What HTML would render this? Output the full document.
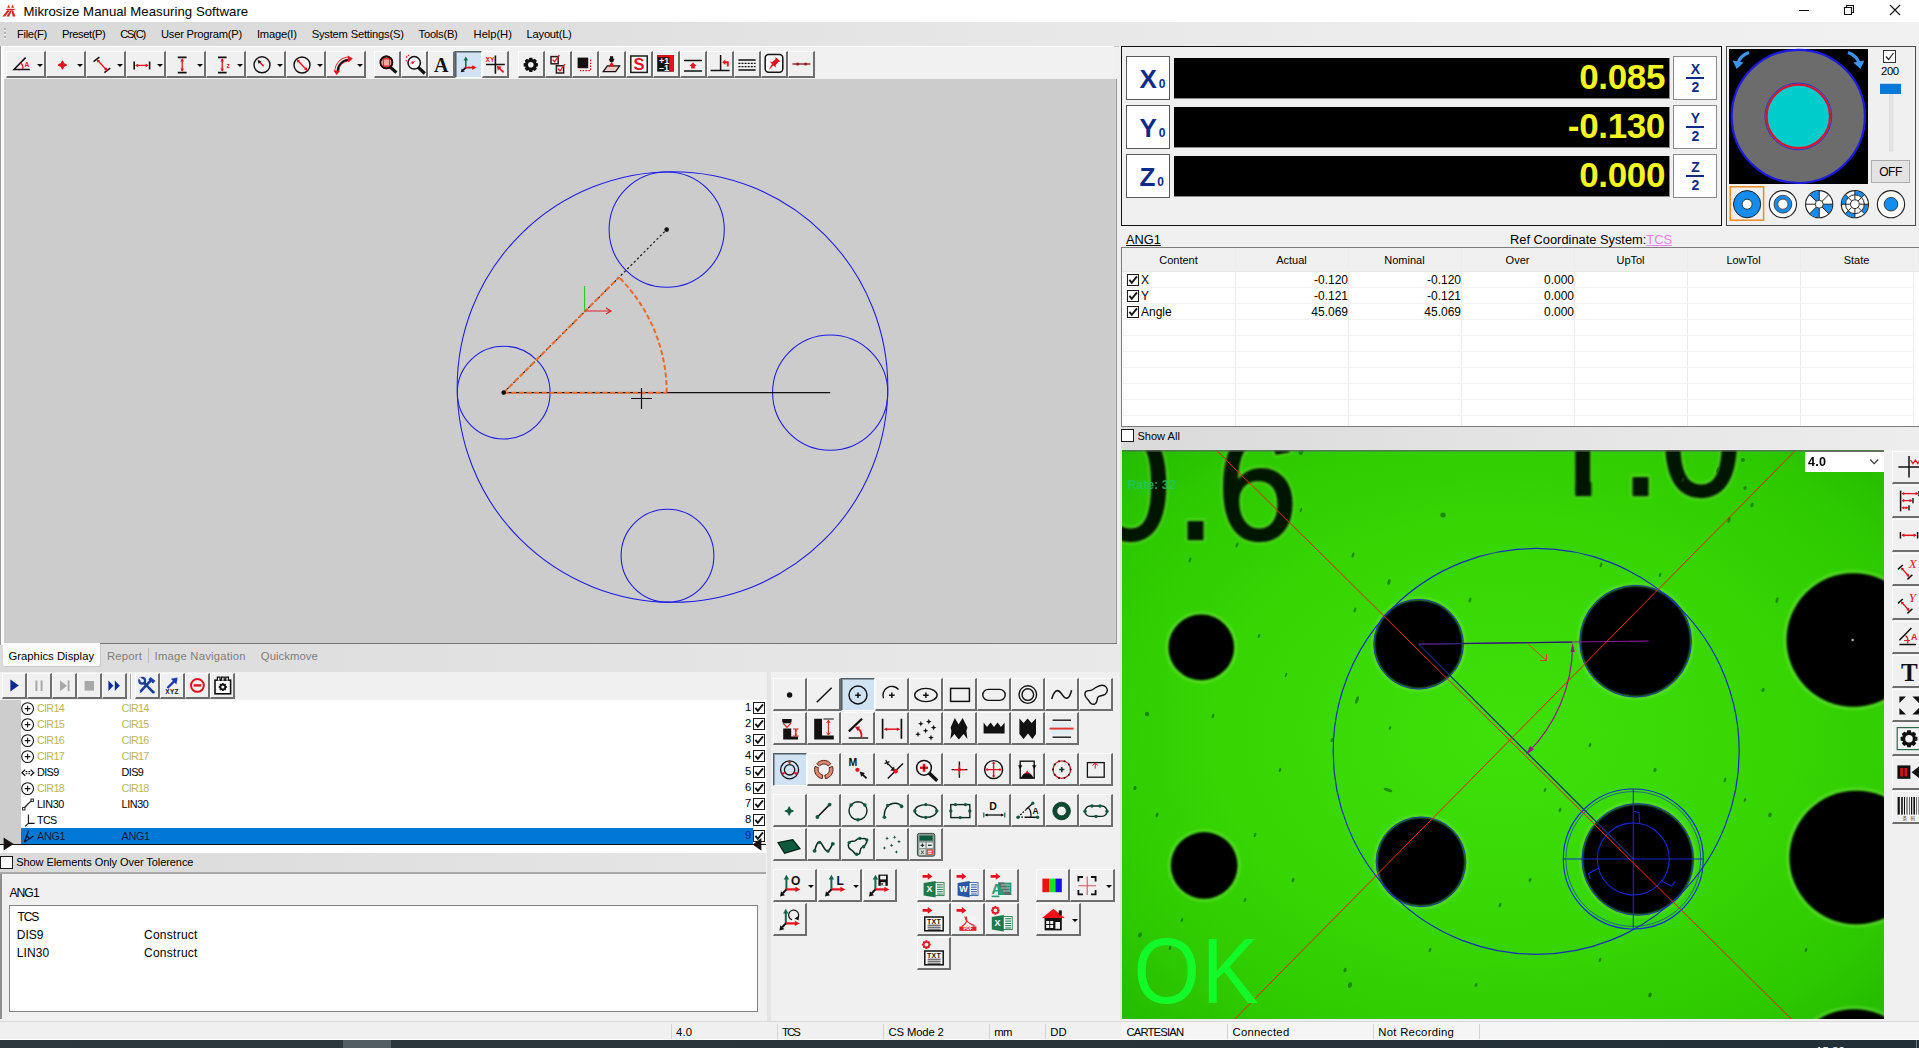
<!DOCTYPE html>
<html lang="en"><head><meta charset="utf-8"><title>Mikrosize Manual Measuring Software</title>
<style>
*{box-sizing:border-box;margin:0;padding:0}
html,body{width:1919px;height:1048px;overflow:hidden;background:#f0f0f0;font-family:"Liberation Sans",sans-serif;font-size:12px;color:#000}
.abs{position:absolute}
#titlebar{left:0;top:0;width:1919px;height:22px;background:#fff}
#title{left:22px;top:3px;font-size:13.2px;letter-spacing:0.1px;color:#000;white-space:nowrap}
#menubar{left:0;top:22px;width:1919px;height:24px;background:linear-gradient(to right,#d9d9d9,#dedede 25%,#e6e6e6 50%,#ededed 75%,#f1f1f1)}
#menubar span{position:absolute;top:5px;font-size:11.4px;white-space:nowrap;color:#000}
.btn{position:absolute;background:#f0f0f0;border-top:1px solid #fcfcfc;border-left:1px solid #fcfcfc;border-right:2px solid #6e6e6e;border-bottom:2px solid #6e6e6e}
.btn.on{background:#cfe3f5;border-top:1px solid #525e68;border-left:1px solid #525e68;border-right:1px solid #fff;border-bottom:1px solid #fff;box-shadow:inset 1px 1px 0 #8d9ba8}
.btn.on svg{left:1px;top:1px}
.btn svg{position:absolute;left:0;top:0}
.btn.d1 svg{top:1px}
.btn.d2 svg{top:2px}
.dd{position:absolute;width:0;height:0;border-left:3.5px solid transparent;border-right:3.5px solid transparent;border-top:3.6px solid #000}
.t{position:absolute;white-space:nowrap}
.cb{position:absolute;width:13px;height:13px;background:#fff;border:1px solid #222}
</style></head>
<body>
<div id="titlebar" class="abs"></div>
<svg class="abs" style="left:0;top:0" width="20" height="20" viewBox="0 0 20 20"><g fill="#d62a1e"><path d="M8.6 4.6 L10 7.7 H7.2Z"/><path d="M12.6 4.6 L14 7.7 H11.2Z"/><path d="M6.2 8.8 H14.6 V10 H6.2Z"/><path d="M7.4 10.2 H10 L5 16.5 H2.4Z"/><path d="M10.4 10.2 H12 L9.2 16.5 H6.4Z"/><path d="M11.6 10.2 H13.2 L15.4 16.5 H12.6Z"/></g></svg>
<div class="t" style="left:23.4px;top:4px;font-size:13.2px;letter-spacing:0.037px;">Mikrosize Manual Measuring Software</div>
<svg class="abs" style="left:1780px;top:0" width="139" height="22" viewBox="0 0 139 22"><path d="M19 10.5 H29" stroke="#111" stroke-width="1"/><path d="M64.5 7.5 H71.5 V14.5 H64.5Z M66.5 7.5 V5.5 H73.5 V12.5 H71.5" stroke="#111" stroke-width="1.1" fill="none"/><path d="M110 5 L120 15 M120 5 L110 15" stroke="#111" stroke-width="1.1"/></svg>
<div id="menubar" class="abs">
<i class="abs" style="left:3.6px;top:6px;width:2.4px;height:12px;background:repeating-linear-gradient(#b4b4b4 0 2px,#f2f2f2 2px 3px,transparent 3px 4px)"></i>
</div>
<div class="t" style="left:17px;top:27.5px;font-size:11.2px;letter-spacing:-0.341px;">File(F)</div>
<div class="t" style="left:62px;top:27.5px;font-size:11.2px;letter-spacing:-0.450px;">Preset(P)</div>
<div class="t" style="left:120.3px;top:27.5px;font-size:11.2px;letter-spacing:-1.277px;">CS(C)</div>
<div class="t" style="left:161px;top:27.5px;font-size:11.2px;letter-spacing:-0.238px;">User Program(P)</div>
<div class="t" style="left:257px;top:27.5px;font-size:11.2px;letter-spacing:-0.243px;">Image(I)</div>
<div class="t" style="left:311.7px;top:27.5px;font-size:11.2px;letter-spacing:-0.209px;">System Settings(S)</div>
<div class="t" style="left:418.6px;top:27.5px;font-size:11.2px;letter-spacing:-0.254px;">Tools(B)</div>
<div class="t" style="left:473.6px;top:27.5px;font-size:11.2px;letter-spacing:-0.047px;">Help(H)</div>
<div class="t" style="left:526.6px;top:27.5px;font-size:11.2px;letter-spacing:-0.252px;">Layout(L)</div>
<div class="abs" style="left:0;top:45.5px;width:1119px;height:1px;background:linear-gradient(to right,#a8a8a8,#c4c4c4)"></div>
<div class="abs" style="left:1px;top:46px;width:1113px;height:33px;background:#f1f1f1;border-left:1px solid #fff;border-top:1px solid #fff"></div>
<div class="abs" style="left:1116px;top:79px;width:1px;height:565px;background:#9c9c9c"></div>
<div class="btn " style="left:6px;top:51px;width:40px;height:27px"><svg width="37" height="24" viewBox="0 0 37 24"><path d="M18.6 5.6 L7 17.4 H22.8" fill="none" stroke="#111" stroke-width="1.5"/><path d="M13.6 10.8 Q16.4 13.4 16 17.4" fill="none" stroke="#e8101c" stroke-width="1.2"/><text x="17.6" y="15" style="font-family:'Liberation Sans',sans-serif;font-weight:bold;font-size:6.6px" fill="#e8101c">A</text></svg><i class="dd" style="left:30.2px;top:11.6px"></i></div>
<div class="btn " style="left:46px;top:51px;width:40px;height:27px"><svg width="37" height="24" viewBox="0 0 37 24"><path d="M15.4 9.4 L16.6 11.8 L19.2 13 L16.6 14.2 L15.4 16.8 L14.2 14.2 L11.6 13 L14.2 11.8 Z" fill="#e8101c" stroke="#e8101c" stroke-width="1.5" stroke-linejoin="round"/></svg><i class="dd" style="left:30.2px;top:11.6px"></i></div>
<div class="btn " style="left:86px;top:51px;width:40px;height:27px"><svg width="37" height="24" viewBox="0 0 37 24"><path d="M6.6 9.6 L12.4 5.2 M17.4 20.6 L23.2 16.2" stroke="#111" stroke-width="1.5"/><path d="M10.4 8 L19.8 18.2" stroke="#e8101c" stroke-width="1.3"/><path d="M9.60 7.20 L13.05 8.38 L10.45 10.75 Z" fill="#e8101c"/><path d="M20.50 19.00 L17.05 17.82 L19.65 15.45 Z" fill="#e8101c"/></svg><i class="dd" style="left:30.2px;top:11.6px"></i></div>
<div class="btn " style="left:126px;top:51px;width:40px;height:27px"><svg width="37" height="24" viewBox="0 0 37 24"><path d="M7.2 9.4 V17.4 M22.6 9.4 V17.4" stroke="#111" stroke-width="1.6"/><path d="M9 13.4 H21" stroke="#e8101c" stroke-width="1.3"/><path d="M8.00 13.40 L11.20 11.64 L11.20 15.16 Z" fill="#e8101c"/><path d="M21.80 13.40 L18.60 15.16 L18.60 11.64 Z" fill="#e8101c"/></svg><i class="dd" style="left:30.2px;top:11.6px"></i></div>
<div class="btn " style="left:166px;top:51px;width:40px;height:27px"><svg width="37" height="24" viewBox="0 0 37 24"><path d="M10.8 5.4 H19.6 M10.8 20.6 H19.6" stroke="#111" stroke-width="1.7"/><path d="M15.2 7 V19" stroke="#e8101c" stroke-width="1.3"/><path d="M15.20 6.20 L16.96 9.40 L13.44 9.40 Z" fill="#e8101c"/><path d="M15.20 19.80 L13.44 16.60 L16.96 16.60 Z" fill="#e8101c"/></svg><i class="dd" style="left:30.2px;top:11.6px"></i></div>
<div class="btn " style="left:206px;top:51px;width:40px;height:27px"><svg width="37" height="24" viewBox="0 0 37 24"><path d="M11 5.4 H19.6 M11 20.6 H19.6" stroke="#111" stroke-width="1.7"/><path d="M15.2 7 V19" stroke="#e8101c" stroke-width="1.3"/><path d="M15.20 6.20 L16.96 9.40 L13.44 9.40 Z" fill="#e8101c"/><path d="M15.20 19.80 L13.44 16.60 L16.96 16.60 Z" fill="#e8101c"/><text x="19.4" y="15.6" style="font-family:'Liberation Sans',sans-serif;font-weight:bold;font-size:6.6px" fill="#e8101c">z</text></svg><i class="dd" style="left:30.2px;top:11.6px"></i></div>
<div class="btn " style="left:246px;top:51px;width:40px;height:27px"><svg width="37" height="24" viewBox="0 0 37 24"><circle cx="15" cy="12.8" r="8" fill="none" stroke="#111" stroke-width="1.4"/><path d="M16.6 14.2 L11.6 9" stroke="#e8101c" stroke-width="1.4"/><path d="M10.60 8.00 L14.30 9.17 L11.59 11.75 Z" fill="#111"/></svg><i class="dd" style="left:30.2px;top:11.6px"></i></div>
<div class="btn " style="left:286px;top:51px;width:40px;height:27px"><svg width="37" height="24" viewBox="0 0 37 24"><circle cx="15" cy="13" r="8" fill="none" stroke="#111" stroke-width="1.4"/><path d="M10.2 8 L19.8 18" stroke="#e8101c" stroke-width="1.4"/><path d="M9.60 7.40 L12.86 8.43 L10.47 10.71 Z" fill="#e8101c"/><path d="M20.60 18.80 L17.12 17.70 L19.67 15.27 Z" fill="#e8101c"/></svg><i class="dd" style="left:30.2px;top:11.6px"></i></div>
<div class="btn " style="left:326px;top:51px;width:40px;height:27px"><svg width="37" height="24" viewBox="0 0 37 24"><path d="M9.8 19.4 A12.4 12.4 0 0 1 21.6 6.9" fill="none" stroke="#e8101c" stroke-width="4.6"/><path d="M9.8 19.4 A12.4 12.4 0 0 1 21.6 6.9" fill="none" stroke="#f6f0f0" stroke-width="3"/><path d="M10.6 19.2 A11.6 11.6 0 0 1 21.4 7.8" fill="none" stroke="#111" stroke-width="1.9"/><path d="M20.6 3.4 L25.8 6.4 L21.4 10.6 Z" fill="#e8101c"/><path d="M6.4 18.4 L13.2 18.8 L9.6 23 Z" fill="#e8101c"/></svg><i class="dd" style="left:30.2px;top:11.6px"></i></div>
<div class="btn " style="left:374px;top:51px;width:27px;height:27px"><svg width="24" height="24" viewBox="0 0 24 24"><path d="M15.6 15.4 L20.2 19.6" stroke="#111" stroke-width="3.2" stroke-linecap="square"/><circle cx="11.4" cy="10.4" r="6" fill="#f4f4f4" stroke="#111" stroke-width="1.6"/><rect x="8.2" y="6.8" width="6.6" height="7.4" fill="#f4a8a0" stroke="#e8101c" stroke-width="1.3"/><circle cx="11.4" cy="10.4" r="6" fill="none" stroke="#1a0000" stroke-width="1.6"/></svg></div>
<div class="btn " style="left:401px;top:51px;width:27px;height:27px"><svg width="24" height="24" viewBox="0 0 24 24"><path d="M16.6 15.6 L21.6 20.4" stroke="#111" stroke-width="3.2" stroke-linecap="square"/><circle cx="12.2" cy="10.8" r="6.2" fill="#f4f4f4" stroke="#111" stroke-width="1.5"/><path d="M4.2 5.6 L5.6 3.4 L8 3.2 M4.4 9.4 L4 7.4" fill="none" stroke="#e8101c" stroke-width="1.1" stroke-dasharray="1.6 1.2"/><path d="M8.6 11.6 L11 9.6 L10.4 11.8 L12.6 9.2" fill="none" stroke="#e8101c" stroke-width="1"/></svg></div>
<div class="btn " style="left:428px;top:51px;width:27px;height:27px"><svg width="24" height="24" viewBox="0 0 24 24"><text x="12.2" y="19.6" text-anchor="middle" style="font-family:'Liberation Serif',serif;font-weight:bold;font-size:20px" fill="#111">A</text></svg></div>
<div class="btn on" style="left:455px;top:51px;width:27px;height:27px"><svg width="24" height="24" viewBox="0 0 24 24"><path d="M8.8 14.6 V6.4" stroke="#0a6a4a" stroke-width="1.5"/><path d="M8.8 3.4 L11.1 7.6 H6.5 Z" fill="#0a6a4a"/><path d="M8.8 14.6 H16" stroke="#e8101c" stroke-width="1.8"/><path d="M19.6 14.6 L15.2 12.2 V17 Z" fill="#e8101c"/><path d="M8.8 14.6 L6 17.2" stroke="#111" stroke-width="1.8"/><path d="M3.8 19.2 L4.8 15.4 L7.8 18.4 Z" fill="#111"/></svg></div>
<div class="btn " style="left:482px;top:51px;width:27px;height:27px"><svg width="24" height="24" viewBox="0 0 24 24"><path d="M3 12.5 H21.8 M12.4 3.4 V21.8" stroke="#111" stroke-width="1.6"/><text x="2.6" y="9.8" style="font-family:'Liberation Sans',sans-serif;font-weight:bold;font-size:6.6px;letter-spacing:-0.1px" fill="#e8101c">XY</text><path d="M20.6 20.4 L15.6 15.6" stroke="#e8101c" stroke-width="1.7"/><path d="M13.8 13.8 L18.6 14.8 L14.8 18.6 Z" fill="#e8101c"/></svg></div>
<div class="btn " style="left:518px;top:51px;width:27px;height:27px"><svg width="24" height="24" viewBox="0 0 24 24"><path d="M18.95 11.35 L18.95 14.25 L16.87 14.94 L16.90 14.87 L17.88 16.83 L15.83 18.88 L13.87 17.90 L13.94 17.86 L13.25 19.95 L10.35 19.95 L9.66 17.87 L9.73 17.90 L7.77 18.88 L5.72 16.83 L6.70 14.87 L6.74 14.94 L4.65 14.25 L4.65 11.35 L6.73 10.66 L6.70 10.73 L5.72 8.77 L7.77 6.72 L9.73 7.70 L9.66 7.74 L10.35 5.65 L13.25 5.65 L13.94 7.73 L13.87 7.70 L15.83 6.72 L17.88 8.77 L16.90 10.73 L16.86 10.66Z" fill="#111"/><circle cx="11.8" cy="12.8" r="2.8" fill="#f0f0f0"/></svg></div>
<div class="btn " style="left:545px;top:51px;width:27px;height:27px"><svg width="24" height="24" viewBox="0 0 24 24"><rect x="5" y="4.6" width="7.2" height="7.2" fill="none" stroke="#2a1a1a" stroke-width="1.5"/><path d="M6.6 7.6 L8.6 9.8 L13.4 3" fill="none" stroke="#e8101c" stroke-width="1.3"/><rect x="10.4" y="13.8" width="7.2" height="7.2" fill="none" stroke="#2a1a1a" stroke-width="1.5"/><path d="M12 16.8 L14 19 L18.8 12.2" fill="none" stroke="#e8101c" stroke-width="1.3"/></svg></div>
<div class="btn d2" style="left:572px;top:51px;width:27px;height:27px"><svg width="24" height="24" viewBox="0 0 24 24"><rect x="4.6" y="3.6" width="10.6" height="10.6" fill="#111"/><path d="M17.6 5.6 V16.6 H7" fill="none" stroke="#e8101c" stroke-width="1.2" stroke-dasharray="1.6 1.3"/></svg></div>
<div class="btn d1" style="left:599px;top:51px;width:27px;height:27px"><svg width="24" height="24" viewBox="0 0 24 24"><path d="M7.4 12.8 H19.6 L15.6 18.6 H3.2 Z" fill="#f8c8c4" stroke="#111" stroke-width="1.3"/><path d="M8.6 13.4 L11.6 8.6 L14.6 13.4 Z" fill="#e8101c"/><rect x="10" y="3.2" width="3.2" height="3.2" fill="#111"/><path d="M8.8 5.8 H14.4 L13.2 9 H10 Z" fill="#111"/></svg></div>
<div class="btn d1" style="left:626px;top:51px;width:27px;height:27px"><svg width="24" height="24" viewBox="0 0 24 24"><rect x="3.8" y="3" width="16.4" height="16.4" fill="#fff" stroke="#1a1a1a" stroke-width="1.5"/><text x="12" y="17" text-anchor="middle" style="font-family:'Liberation Sans',sans-serif;font-weight:bold;font-size:16.5px" fill="#e8101c">S</text></svg></div>
<div class="btn " style="left:653px;top:51px;width:27px;height:27px"><svg width="24" height="24" viewBox="0 0 24 24"><rect x="3.2" y="3.2" width="16.6" height="16.4" fill="#111"/><rect x="15.2" y="3.2" width="4.6" height="16.4" fill="#e8101c"/><rect x="3.2" y="3.2" width="16.6" height="2" fill="#e8101c"/><text x="5" y="11.6" style="font-family:'Liberation Sans',sans-serif;font-weight:bold;font-size:9px" fill="#fff">+1</text><text x="5" y="19" style="font-family:'Liberation Sans',sans-serif;font-weight:bold;font-size:9px" fill="#fff">–1</text></svg></div>
<div class="btn d2" style="left:680px;top:51px;width:27px;height:27px"><svg width="24" height="24" viewBox="0 0 24 24"><path d="M3 6.6 H21 M3 17 H21" stroke="#111" stroke-width="1.5"/><path d="M12 8.6 L15.6 12 H13.8 V14.6 H10.2 V12 H8.4 Z" fill="#e8101c"/></svg></div>
<div class="btn d1" style="left:707px;top:51px;width:27px;height:27px"><svg width="24" height="24" viewBox="0 0 24 24"><path d="M2.6 17.6 H21.6 M12.6 2 V17.6" stroke="#111" stroke-width="1.5"/><path d="M19.8 13.4 V9.2 H16.2" fill="none" stroke="#e8101c" stroke-width="1.9"/><path d="M14.2 9.2 L17.4 6.4 V12 Z" fill="#e8101c"/></svg></div>
<div class="btn d1" style="left:734px;top:51px;width:27px;height:27px"><svg width="24" height="24" viewBox="0 0 24 24"><path d="M3.4 7 H20.6 M3.4 17 H20.6" stroke="#111" stroke-width="1.6"/><path d="M3.4 10.4 H20.6 M3.4 13.6 H20.6" stroke="#111" stroke-width="1.4" stroke-dasharray="2 1.1"/></svg></div>
<div class="btn " style="left:761px;top:51px;width:27px;height:27px"><svg width="24" height="24" viewBox="0 0 24 24"><rect x="3.2" y="2.6" width="17.6" height="17.6" rx="3.4" fill="#fff" stroke="#111" stroke-width="1.5"/><path d="M13.6 5 L18.4 9.6 L16.2 10 L13.6 13.4 L14 15.8 L11.4 13.4 L6.4 18.4 L10 12 L7.6 9.6 L10.2 10 L13.4 7.2 Z" fill="#e8101c"/></svg></div>
<div class="btn " style="left:788px;top:51px;width:27px;height:27px"><svg width="24" height="24" viewBox="0 0 24 24"><path d="M3.4 12 H21.4" stroke="#7a1a14" stroke-width="1.3"/><circle cx="8.6" cy="12" r="1.5" fill="#a01a14"/><circle cx="16.6" cy="12" r="1.5" fill="#a01a14"/></svg></div>
<div class="abs" style="left:2px;top:79px;width:1114px;height:564px;background:#cccccc;border-left:2px solid #e9e9e9"></div><svg class="abs" style="left:0;top:0" width="1120" height="645" viewBox="0 0 1120 645"><g fill="none" stroke="#1c1ce8" stroke-width="1.05"><circle cx="672.5" cy="387" r="215.3"/><circle cx="666.7" cy="229.6" r="57.6"/><circle cx="503.7" cy="392.6" r="46.4"/><circle cx="830.2" cy="392.6" r="57.6"/><circle cx="667.5" cy="555.7" r="46.4"/></g><path d="M503.7 392.6 H830.2" stroke="#111" stroke-width="1.1"/><path d="M503.7 392.6 L666.7 229.6" stroke="#111" stroke-width="1.1" stroke-dasharray="2.4 2.2"/><g fill="none" stroke="#ee6a26" stroke-width="2" stroke-dasharray="5 2.6"><path d="M503.7 392.8 H666.7"/><path d="M503.7 392.6 L619.0 277.3"/><path d="M666.7 392.6 A163 163 0 0 0 619.0 277.3"/></g><circle cx="503.7" cy="392.6" r="2.3" fill="#111"/><circle cx="666.7" cy="229.6" r="2.3" fill="#111"/><path d="M584.6 286 V311" stroke="#22cc22" stroke-width="1.1"/><path d="M584.6 311 H611 M606 308 L611 311 L606 314" stroke="#e02020" stroke-width="1.1" fill="none"/><path d="M631 398.5 H652 M641.5 388 V409" stroke="#111" stroke-width="1.2"/></svg>
<div class="abs" style="left:0;top:644px;width:1121px;height:28px;background:linear-gradient(to right,#dbdbdb,#e2e2e2 50%,#e9e9e9)"></div>
<div class="abs" style="left:0;top:643px;width:1117px;height:1.3px;background:#777"></div>
<div class="abs" style="left:3px;top:642.6px;width:97px;height:23.4px;background:#fafafa;border-radius:0 0 2px 2px;box-shadow:1px 1px 0 #c9c9c9"></div>
<div class="abs" style="left:0;top:47px;width:1px;height:598px;background:#9a9a9a"></div>
<div class="abs" style="left:1.4px;top:47px;width:2.8px;height:598px;background:#fbfbfb"></div>
<div class="t" style="left:8.4px;top:650px;font-size:11.3px;letter-spacing:0.021px;">Graphics Display</div>
<div class="t" style="left:107px;top:650px;font-size:11.3px;letter-spacing:0.205px;color:#7d7d7d;">Report</div>
<div class="abs" style="left:148px;top:648px;width:1px;height:15px;background:#bdbdbd"></div>
<div class="t" style="left:154.6px;top:650px;font-size:11.3px;letter-spacing:0.203px;color:#7d7d7d;">Image Navigation</div>
<div class="t" style="left:260.8px;top:650px;font-size:11.3px;letter-spacing:0.069px;color:#7d7d7d;">Quickmove</div>
<div class="abs" style="left:0;top:672px;width:768px;height:28px;background:#f0f0f0"></div>
<div class="btn " style="left:2px;top:673px;width:25px;height:26px"><svg width="22" height="23" viewBox="0 0 22 23"><path d="M7.4 5.6 L15.8 11.6 L7.4 17.6 Z" fill="#0a2a9a"/></svg></div>
<div class="btn " style="left:27px;top:673px;width:25px;height:26px"><svg width="22" height="23" viewBox="0 0 22 23"><path d="M8.4 6.4 V17 M13.6 6.4 V17" stroke="#a8a8a8" stroke-width="2"/></svg></div>
<div class="btn " style="left:52px;top:673px;width:25px;height:26px"><svg width="22" height="23" viewBox="0 0 22 23"><path d="M7 6.4 L14 11.8 L7 17.2 Z" fill="#a8a8a8"/><path d="M15.6 6.4 V17.2" stroke="#a8a8a8" stroke-width="1.8"/></svg></div>
<div class="btn " style="left:77px;top:673px;width:25px;height:26px"><svg width="22" height="23" viewBox="0 0 22 23"><rect x="6.6" y="7" width="9.4" height="9.6" fill="#a8a8a8"/></svg></div>
<div class="btn " style="left:102px;top:673px;width:25px;height:26px"><svg width="22" height="23" viewBox="0 0 22 23"><path d="M5.4 6.6 L10.4 11.8 L5.4 17 Z M11.8 6.6 L16.8 11.8 L11.8 17 Z" fill="#0a2a9a"/></svg></div>
<div class="abs" style="left:130px;top:674px;width:2px;height:25px;background:#a6a6a6;border-right:1px solid #fff"></div>
<div class="btn " style="left:135px;top:673px;width:25px;height:26px"><svg width="22" height="23" viewBox="0 0 22 23"><path d="M4.6 17.4 L14.6 6.6" stroke="#1a3c9c" stroke-width="2.6"/><path d="M13.4 4.4 L18.2 8.2" stroke="#1a3c9c" stroke-width="3.4"/><path d="M4 18.4 L6 16.4" stroke="#1a3c9c" stroke-width="1.4"/><path d="M7.6 8.4 L16.6 17.6" stroke="#1a3c9c" stroke-width="2.6"/><circle cx="6.2" cy="6.8" r="2.9" fill="none" stroke="#1a3c9c" stroke-width="2.2"/><path d="M3.4 3.8 L6.4 6.8" stroke="#f0f0f0" stroke-width="2.2"/><circle cx="17.2" cy="18" r="1.6" fill="#1a3c9c"/></svg></div>
<div class="btn " style="left:160px;top:673px;width:25px;height:26px"><svg width="22" height="23" viewBox="0 0 22 23"><path d="M6.4 14 L13.6 6.8" stroke="#1a3cb4" stroke-width="2.4"/><path d="M16.6 3.6 L15.4 10.4 L9.8 4.8 Z" fill="#1a3cb4"/><text x="11" y="20.2" text-anchor="middle" style="font-family:'Liberation Sans',sans-serif;font-weight:bold;font-size:6.4px;letter-spacing:0.3px" fill="#111">XYZ</text></svg></div>
<div class="btn " style="left:185px;top:673px;width:25px;height:26px"><svg width="22" height="23" viewBox="0 0 22 23"><circle cx="11.4" cy="11.4" r="6.4" fill="none" stroke="#e01020" stroke-width="2"/><rect x="7.6" y="10.2" width="7.6" height="2.4" fill="#e01020"/></svg></div>
<div class="btn " style="left:210px;top:673px;width:25px;height:26px"><svg width="22" height="23" viewBox="0 0 22 23"><rect x="4" y="6.2" width="15.6" height="13.6" fill="#fff" stroke="#111" stroke-width="1.6"/><path d="M6.4 6.6 V3.2 H9 V6.6 M10.6 6.6 V3.2 H13.2 V6.6 M14.8 6.6 V3.2 H17.4 V6.6" fill="#fff" stroke="#111" stroke-width="1.3"/><path d="M15.92 12.17 L15.92 13.83 L14.55 14.20 L14.59 14.10 L15.30 15.32 L14.12 16.50 L12.90 15.79 L13.00 15.75 L12.63 17.12 L10.97 17.12 L10.60 15.75 L10.70 15.79 L9.48 16.50 L8.30 15.32 L9.01 14.10 L9.05 14.20 L7.68 13.83 L7.68 12.17 L9.05 11.80 L9.01 11.90 L8.30 10.68 L9.48 9.50 L10.70 10.21 L10.60 10.25 L10.97 8.88 L12.63 8.88 L13.00 10.25 L12.90 10.21 L14.12 9.50 L15.30 10.68 L14.59 11.90 L14.55 11.80Z" fill="#111"/><circle cx="11.8" cy="13" r="1.5" fill="#fff"/></svg></div>
<div class="abs" style="left:0;top:700px;width:20.5px;height:145px;background:#cdcdcd"></div>
<div class="abs" style="left:20.5px;top:700px;width:745.5px;height:153px;background:#fff"></div>
<div class="abs" style="left:0;top:845px;width:20.5px;height:8px;background:#fff"></div>
<div class="abs" style="left:767px;top:672px;width:4px;height:349px;background:#e4e4e4"></div>
<svg class="abs" style="left:21px;top:700.5px" width="14" height="15" viewBox="0 0 14 15"><circle cx="6.6" cy="7.6" r="5.9" fill="#fff" stroke="#111" stroke-width="1.1"/><path d="M3.8 7.6 H9.4 M6.6 4.8 V10.4" stroke="#111" stroke-width="1.1"/></svg>
<div class="t" style="left:37px;top:702px;font-size:10.8px;letter-spacing:-0.716px;color:#b9b656;">CIR14</div>
<div class="t" style="left:121.6px;top:702px;font-size:10.8px;letter-spacing:-0.716px;color:#b9b656;">CIR14</div>
<div class="t" style="left:745px;top:701px;font-size:11.2px;">1</div>
<svg class="abs" style="left:752.5px;top:702px" width="12" height="12" viewBox="0 0 12 12"><rect x="0.5" y="0.5" width="11" height="11" fill="#fff" stroke="#1a1a1a" stroke-width="1"/><path d="M2.4 5.90769 L4.8 8.86154 L9.96923 2.4" fill="none" stroke="#111" stroke-width="1.84615"/></svg>
<svg class="abs" style="left:21px;top:716.5px" width="14" height="15" viewBox="0 0 14 15"><circle cx="6.6" cy="7.6" r="5.9" fill="#fff" stroke="#111" stroke-width="1.1"/><path d="M3.8 7.6 H9.4 M6.6 4.8 V10.4" stroke="#111" stroke-width="1.1"/></svg>
<div class="t" style="left:37px;top:718px;font-size:10.8px;letter-spacing:-0.716px;color:#b9b656;">CIR15</div>
<div class="t" style="left:121.6px;top:718px;font-size:10.8px;letter-spacing:-0.716px;color:#b9b656;">CIR15</div>
<div class="t" style="left:745px;top:717px;font-size:11.2px;">2</div>
<svg class="abs" style="left:752.5px;top:718px" width="12" height="12" viewBox="0 0 12 12"><rect x="0.5" y="0.5" width="11" height="11" fill="#fff" stroke="#1a1a1a" stroke-width="1"/><path d="M2.4 5.90769 L4.8 8.86154 L9.96923 2.4" fill="none" stroke="#111" stroke-width="1.84615"/></svg>
<svg class="abs" style="left:21px;top:732.5px" width="14" height="15" viewBox="0 0 14 15"><circle cx="6.6" cy="7.6" r="5.9" fill="#fff" stroke="#111" stroke-width="1.1"/><path d="M3.8 7.6 H9.4 M6.6 4.8 V10.4" stroke="#111" stroke-width="1.1"/></svg>
<div class="t" style="left:37px;top:734px;font-size:10.8px;letter-spacing:-0.716px;color:#b9b656;">CIR16</div>
<div class="t" style="left:121.6px;top:734px;font-size:10.8px;letter-spacing:-0.716px;color:#b9b656;">CIR16</div>
<div class="t" style="left:745px;top:733px;font-size:11.2px;">3</div>
<svg class="abs" style="left:752.5px;top:734px" width="12" height="12" viewBox="0 0 12 12"><rect x="0.5" y="0.5" width="11" height="11" fill="#fff" stroke="#1a1a1a" stroke-width="1"/><path d="M2.4 5.90769 L4.8 8.86154 L9.96923 2.4" fill="none" stroke="#111" stroke-width="1.84615"/></svg>
<svg class="abs" style="left:21px;top:748.5px" width="14" height="15" viewBox="0 0 14 15"><circle cx="6.6" cy="7.6" r="5.9" fill="#fff" stroke="#111" stroke-width="1.1"/><path d="M3.8 7.6 H9.4 M6.6 4.8 V10.4" stroke="#111" stroke-width="1.1"/></svg>
<div class="t" style="left:37px;top:750px;font-size:10.8px;letter-spacing:-0.716px;color:#b9b656;">CIR17</div>
<div class="t" style="left:121.6px;top:750px;font-size:10.8px;letter-spacing:-0.716px;color:#b9b656;">CIR17</div>
<div class="t" style="left:745px;top:749px;font-size:11.2px;">4</div>
<svg class="abs" style="left:752.5px;top:750px" width="12" height="12" viewBox="0 0 12 12"><rect x="0.5" y="0.5" width="11" height="11" fill="#fff" stroke="#1a1a1a" stroke-width="1"/><path d="M2.4 5.90769 L4.8 8.86154 L9.96923 2.4" fill="none" stroke="#111" stroke-width="1.84615"/></svg>
<svg class="abs" style="left:21px;top:764.5px" width="14" height="15" viewBox="0 0 14 15"><path d="M4.6 6.6 H9.2 M4.6 8.8 H9.2" stroke="#111" stroke-width="1.1" stroke-dasharray="1.8 1"/><path d="M4.2 4.6 L1 7.7 L4.2 10.8 M9.6 4.6 L12.8 7.7 L9.6 10.8" fill="none" stroke="#111" stroke-width="1.3"/></svg>
<div class="t" style="left:37px;top:766px;font-size:10.8px;letter-spacing:-0.587px;">DIS9</div>
<div class="t" style="left:121.6px;top:766px;font-size:10.8px;letter-spacing:-0.587px;">DIS9</div>
<div class="t" style="left:745px;top:765px;font-size:11.2px;">5</div>
<svg class="abs" style="left:752.5px;top:766px" width="12" height="12" viewBox="0 0 12 12"><rect x="0.5" y="0.5" width="11" height="11" fill="#fff" stroke="#1a1a1a" stroke-width="1"/><path d="M2.4 5.90769 L4.8 8.86154 L9.96923 2.4" fill="none" stroke="#111" stroke-width="1.84615"/></svg>
<svg class="abs" style="left:21px;top:780.5px" width="14" height="15" viewBox="0 0 14 15"><circle cx="6.6" cy="7.6" r="5.9" fill="#fff" stroke="#111" stroke-width="1.1"/><path d="M3.8 7.6 H9.4 M6.6 4.8 V10.4" stroke="#111" stroke-width="1.1"/></svg>
<div class="t" style="left:37px;top:782px;font-size:10.8px;letter-spacing:-0.716px;color:#b9b656;">CIR18</div>
<div class="t" style="left:121.6px;top:782px;font-size:10.8px;letter-spacing:-0.716px;color:#b9b656;">CIR18</div>
<div class="t" style="left:745px;top:781px;font-size:11.2px;">6</div>
<svg class="abs" style="left:752.5px;top:782px" width="12" height="12" viewBox="0 0 12 12"><rect x="0.5" y="0.5" width="11" height="11" fill="#fff" stroke="#1a1a1a" stroke-width="1"/><path d="M2.4 5.90769 L4.8 8.86154 L9.96923 2.4" fill="none" stroke="#111" stroke-width="1.84615"/></svg>
<svg class="abs" style="left:21px;top:796.5px" width="14" height="15" viewBox="0 0 14 15"><path d="M3 11 L10.4 3.6" stroke="#111" stroke-width="1.1"/><rect x="1.6" y="10.6" width="2.4" height="2.4" fill="#fff" stroke="#111" stroke-width="0.9"/><rect x="10" y="2" width="2.4" height="2.4" fill="#fff" stroke="#111" stroke-width="0.9"/></svg>
<div class="t" style="left:37px;top:798px;font-size:10.8px;letter-spacing:-0.392px;">LIN30</div>
<div class="t" style="left:121.6px;top:798px;font-size:10.8px;letter-spacing:-0.392px;">LIN30</div>
<div class="t" style="left:745px;top:797px;font-size:11.2px;">7</div>
<svg class="abs" style="left:752.5px;top:798px" width="12" height="12" viewBox="0 0 12 12"><rect x="0.5" y="0.5" width="11" height="11" fill="#fff" stroke="#1a1a1a" stroke-width="1"/><path d="M2.4 5.90769 L4.8 8.86154 L9.96923 2.4" fill="none" stroke="#111" stroke-width="1.84615"/></svg>
<svg class="abs" style="left:21px;top:812.5px" width="14" height="15" viewBox="0 0 14 15"><path d="M7.4 1.4 V10.4 H13.6 M7.4 10.4 L4 13.4" fill="none" stroke="#111" stroke-width="1.1"/></svg>
<div class="t" style="left:37px;top:814px;font-size:10.8px;letter-spacing:-0.675px;">TCS</div>
<div class="t" style="left:745px;top:813px;font-size:11.2px;">8</div>
<svg class="abs" style="left:752.5px;top:814px" width="12" height="12" viewBox="0 0 12 12"><rect x="0.5" y="0.5" width="11" height="11" fill="#fff" stroke="#1a1a1a" stroke-width="1"/><path d="M2.4 5.90769 L4.8 8.86154 L9.96923 2.4" fill="none" stroke="#111" stroke-width="1.84615"/></svg>
<div class="abs" style="left:20.5px;top:828px;width:732.5px;height:16px;background:#0078d7"></div>
<div class="abs" style="left:0;top:844px;width:766px;height:1.4px;background:#111"></div>
<svg class="abs" style="left:21px;top:828.5px" width="14" height="15" viewBox="0 0 14 15"><path d="M3.4 13 L7.6 1.6 M3.4 13 L12.6 7" fill="none" stroke="#0a1230" stroke-width="1.3"/><path d="M5 7.6 Q8.4 7.4 8 10.2" fill="none" stroke="#0a1230" stroke-width="1.1"/></svg>
<div class="t" style="left:37px;top:830px;font-size:10.8px;letter-spacing:-0.303px;color:#0b1a3a;">ANG1</div>
<div class="t" style="left:121.6px;top:830px;font-size:10.8px;letter-spacing:-0.303px;color:#0b1a3a;">ANG1</div>
<div class="t" style="left:745px;top:829px;font-size:11.2px;color:#0a2a6a;">9</div>
<svg class="abs" style="left:752.5px;top:830px" width="12" height="12" viewBox="0 0 12 12"><rect x="0.5" y="0.5" width="11" height="11" fill="#fff" stroke="#1a1a1a" stroke-width="1"/><path d="M2.4 5.90769 L4.8 8.86154 L9.96923 2.4" fill="none" stroke="#111" stroke-width="1.84615"/></svg>
<svg class="abs" style="left:0;top:835px" width="16" height="18"><path d="M3.6 2.4 L13.6 9 L3.6 15.6 Z" fill="#1a1212"/></svg>
<svg class="abs" style="left:750px;top:836px" width="18" height="18"><path d="M2.6 8.4 L11.4 2 L11.4 14.8 Z" fill="#1a1212"/><path d="M11 8.4 H16" stroke="#111"/></svg>
<div class="abs" style="left:0;top:853px;width:766px;height:19px;background:linear-gradient(to right,#dadada,#e6e6e6)"></div>
<svg class="abs" style="left:0px;top:855.5px" width="13" height="13" viewBox="0 0 13 13"><rect x="0.5" y="0.5" width="12" height="12" fill="#fff" stroke="#1a1a1a" stroke-width="1"/></svg>
<div class="t" style="left:16.2px;top:856px;font-size:11px;letter-spacing:-0.072px;">Show Elements Only Over Tolerence</div>
<div class="abs" style="left:0;top:872px;width:766px;height:2px;background:#a9a9a9"></div>
<div class="abs" style="left:0;top:874px;width:2px;height:145px;background:#8f8f8f"></div>
<div class="t" style="left:9.4px;top:886px;font-size:12.2px;letter-spacing:-0.974px;">ANG1</div>
<div class="abs" style="left:9px;top:905px;width:749px;height:107px;background:#fff;border:1px solid #828282"></div>
<div class="t" style="left:17.6px;top:910px;font-size:12px;letter-spacing:-1.150px;">TCS</div>
<div class="t" style="left:16.8px;top:928px;font-size:12px;letter-spacing:-0.026px;">DIS9</div>
<div class="t" style="left:16.8px;top:946px;font-size:12px;letter-spacing:0.070px;">LIN30</div>
<div class="t" style="left:144px;top:928px;font-size:12px;letter-spacing:0.256px;">Construct</div>
<div class="t" style="left:144px;top:946px;font-size:12px;letter-spacing:0.256px;">Construct</div>
<div class="btn " style="left:773px;top:678px;width:34px;height:33px"><svg width="31" height="30" viewBox="0 0 31 30"><circle cx="15.6" cy="16" r="2.7" fill="#111"/></svg></div>
<div class="btn " style="left:807px;top:678px;width:34px;height:33px"><svg width="31" height="30" viewBox="0 0 31 30"><path d="M8.8 23.2 L23.6 8.8" stroke="#111" stroke-width="1.5"/></svg></div>
<div class="btn on" style="left:841px;top:678px;width:34px;height:33px"><svg width="31" height="30" viewBox="0 0 31 30"><circle cx="15" cy="15" r="9" fill="none" stroke="#111" stroke-width="1.4"/><path d="M12.2 15.2 H17.8 M15 12.4 V18" stroke="#111" stroke-width="1.5"/></svg></div>
<div class="btn " style="left:875px;top:678px;width:34px;height:33px"><svg width="31" height="30" viewBox="0 0 31 30"><path d="M7.5 19.2 A8.8 8.8 0 0 1 22.5 10.5" fill="none" stroke="#111" stroke-width="1.4"/><path d="M13 16.2 H18.6 M15.8 13.4 V19" stroke="#111" stroke-width="1.5"/></svg></div>
<div class="btn " style="left:909px;top:678px;width:34px;height:33px"><svg width="31" height="30" viewBox="0 0 31 30"><ellipse cx="15.9" cy="16" rx="11.2" ry="6.6" fill="none" stroke="#111" stroke-width="1.4"/><path d="M13.1 16.2 H18.7 M15.9 13.4 V19" stroke="#111" stroke-width="1.5"/></svg></div>
<div class="btn " style="left:943px;top:678px;width:34px;height:33px"><svg width="31" height="30" viewBox="0 0 31 30"><rect x="6.6" y="9.4" width="18.8" height="13" fill="none" stroke="#111" stroke-width="1.5"/></svg></div>
<div class="btn " style="left:977px;top:678px;width:34px;height:33px"><svg width="31" height="30" viewBox="0 0 31 30"><rect x="4.8" y="10.4" width="22.4" height="11" rx="5.5" fill="none" stroke="#111" stroke-width="1.4"/></svg></div>
<div class="btn " style="left:1011px;top:678px;width:34px;height:33px"><svg width="31" height="30" viewBox="0 0 31 30"><circle cx="15.8" cy="15.6" r="8.8" fill="none" stroke="#111" stroke-width="1.4"/><circle cx="15.8" cy="15.6" r="5.8" fill="none" stroke="#111" stroke-width="1.4"/></svg></div>
<div class="btn " style="left:1045px;top:678px;width:34px;height:33px"><svg width="31" height="30" viewBox="0 0 31 30"><path d="M5.8 20.2 C8 11 12 9.4 15.4 14.6 C18.6 19.6 22.6 23 25.6 11.2" fill="none" stroke="#111" stroke-width="1.5"/></svg></div>
<div class="btn " style="left:1079px;top:678px;width:34px;height:33px"><svg width="31" height="30" viewBox="0 0 31 30"><path d="M4.9 15.6 C4.6 12.6 7 11.4 9.4 11.6 C12.6 11.8 13.6 9.6 16.4 8.2 C19.4 6.4 24 5.2 26.4 8.4 C28.6 11.6 26.4 15.4 23 16.2 C20 16.9 18.4 17 17.6 18.8 C16.8 20.8 17.6 23.4 15 24.8 C12.6 26 10.4 24.6 9.4 22.6 C8.4 20.6 5.4 19.2 4.9 15.6 Z" fill="none" stroke="#111" stroke-width="1.4"/></svg></div>
<div class="btn " style="left:773px;top:712px;width:34px;height:33px"><svg width="31" height="30" viewBox="0 0 31 30"><path d="M8.2 6 H17.6 V9 L16 10.2 H9.8 L8.2 9 Z" fill="#111"/><path d="M9 10.2 L13 14.4 L17 10.2" fill="none" stroke="#e8101c" stroke-width="1.1"/><path d="M9.2 15.6 H17.2 V23.4 H24 V26.4 H9.2 Z" fill="#111"/><path d="M19 16 H24.6 M19 23 H24.6 M21.8 16.4 V22.6" stroke="#e8101c" stroke-width="1.2"/><path d="M21.80 16.20 L23.12 18.60 L20.48 18.60 Z" fill="#e8101c"/><path d="M21.80 22.80 L20.48 20.40 L23.12 20.40 Z" fill="#e8101c"/></svg></div>
<div class="btn " style="left:807px;top:712px;width:34px;height:33px"><svg width="31" height="30" viewBox="0 0 31 30"><path d="M6.2 5.8 H14 V22.6 H25.8 V26.6 H6.2 Z" fill="#111"/><path d="M15.4 6 H25.8" stroke="#111" stroke-width="1"/><path d="M20.4 7.6 V21.6" stroke="#e8101c" stroke-width="1"/><path d="M18.6 10 L20.4 7.4 L22.2 10 M18.6 19.4 L20.4 22 L22.2 19.4" fill="none" stroke="#e8101c" stroke-width="1"/></svg></div>
<div class="btn " style="left:841px;top:712px;width:34px;height:33px"><svg width="31" height="30" viewBox="0 0 31 30"><path d="M6.8 18.4 L20 5.8" stroke="#111" stroke-width="2.2"/><path d="M6.6 25 H26.2" stroke="#111" stroke-width="1.4"/><path d="M19.4 24.4 C20 19.4 18.6 17 15.4 15.2" fill="none" stroke="#e8101c" stroke-width="1.9"/><path d="M13 13.8 L18 13.6 L15.8 18.2 Z" fill="#c81820"/></svg></div>
<div class="btn " style="left:875px;top:712px;width:34px;height:33px"><svg width="31" height="30" viewBox="0 0 31 30"><path d="M6.6 5.8 V25.8 M25.4 5.8 V25.8" stroke="#111" stroke-width="1.7"/><path d="M9.4 16.2 H22.6" stroke="#e8101c" stroke-width="1.5"/><path d="M7.60 16.20 L11.20 14.40 L11.20 18.00 Z" fill="#c02024"/><path d="M24.40 16.20 L20.80 18.00 L20.80 14.40 Z" fill="#c02024"/></svg></div>
<div class="btn " style="left:909px;top:712px;width:34px;height:33px"><svg width="31" height="30" viewBox="0 0 31 30"><path d="M10.8 8 L11.584 10.016 L13.6 10.8 L11.584 11.584 L10.8 13.6 L10.016 11.584 L8 10.8 L10.016 10.016 Z" fill="#111"/><path d="M18.8 5.8 L19.584 7.816 L21.6 8.6 L19.584 9.384 L18.8 11.4 L18.016 9.384 L16 8.6 L18.016 7.816 Z" fill="#111"/><path d="M23.6 11.8 L24.384 13.816 L26.4 14.6 L24.384 15.384 L23.6 17.4 L22.816 15.384 L20.8 14.6 L22.816 13.816 Z" fill="#111"/><path d="M15.6 15 L16.384 17.016 L18.4 17.8 L16.384 18.584 L15.6 20.6 L14.816 18.584 L12.8 17.8 L14.816 17.016 Z" fill="#111"/><path d="M8 18.4 L8.784 20.416 L10.8 21.2 L8.784 21.984 L8 24 L7.216 21.984 L5.2 21.2 L7.216 20.416 Z" fill="#111"/><path d="M21 21.8 L21.784 23.816 L23.8 24.6 L21.784 25.384 L21 27.4 L20.216 25.384 L18.2 24.6 L20.216 23.816 Z" fill="#111"/></svg></div>
<div class="btn " style="left:943px;top:712px;width:34px;height:33px"><svg width="31" height="30" viewBox="0 0 31 30"><path d="M6.6 14.4 L10.8 5 L14.6 11.6 L18.6 5 L23.4 14.4 L22.4 18 L23.4 26 L19.6 21 L14.8 26.4 L10.4 21 L6.4 26 L7.4 18 Z" fill="#111"/></svg></div>
<div class="btn " style="left:977px;top:712px;width:34px;height:33px"><svg width="31" height="30" viewBox="0 0 31 30"><path d="M5.6 9.6 L9 14 L12.6 9.6 L16 14 L19.6 9.6 L23 14 L26.6 9.6 V20.4 H5.6 Z" fill="#111"/></svg></div>
<div class="btn " style="left:1011px;top:712px;width:34px;height:33px"><svg width="31" height="30" viewBox="0 0 31 30"><path d="M7.4 5.4 L11.6 10 L15.6 5.6 L19.6 10 L24 5.4 V21 L20.4 26 L16 20.6 L11.6 26 L7.4 21 Z" fill="#111"/></svg></div>
<div class="btn " style="left:1045px;top:712px;width:34px;height:33px"><svg width="31" height="30" viewBox="0 0 31 30"><rect x="6" y="9.6" width="19.6" height="11.6" fill="#dcecf6" opacity="0.8"/><path d="M6.6 7.2 H25" stroke="#2a2a2a" stroke-width="1.5"/><path d="M6.6 24.2 H25" stroke="#2a2a2a" stroke-width="1.5"/><path d="M3.6 15.6 H27.6" stroke="#e0362c" stroke-width="1.9"/></svg></div>
<div class="btn on" style="left:773px;top:753px;width:34px;height:33px"><svg width="31" height="30" viewBox="0 0 31 30"><circle cx="14.6" cy="14.8" r="9" fill="none" stroke="#111" stroke-width="1.3"/><circle cx="14.6" cy="14.8" r="5.2" fill="none" stroke="#111" stroke-width="1.3"/><path d="M14.60 9.40 L14.60 6.00" stroke="#e8101c" stroke-width="1.1"/><path d="M14.60 9.60 L13.04 7.00 L16.16 7.00 Z" fill="#e8101c"/><path d="M9.92 17.50 L6.98 19.20" stroke="#e8101c" stroke-width="1.1"/><path d="M10.10 17.40 L8.63 20.05 L7.07 17.35 Z" fill="#e8101c"/><path d="M19.28 17.50 L22.22 19.20" stroke="#e8101c" stroke-width="1.1"/><path d="M19.10 17.40 L22.13 17.35 L20.57 20.05 Z" fill="#e8101c"/></svg></div>
<div class="btn " style="left:807px;top:753px;width:34px;height:33px"><svg width="31" height="30" viewBox="0 0 31 30"><path d="M22.85 9.69 L21.71 8.55 L20.40 7.63 L18.95 6.95 L17.40 6.54 L15.80 6.40 L14.20 6.54 L12.65 6.95 L11.20 7.63 L9.89 8.55 L8.75 9.69 L11.51 12.00 L12.20 11.31 L13.00 10.75 L13.88 10.34 L14.83 10.09 L15.80 10.00 L16.77 10.09 L17.72 10.34 L18.60 10.75 L19.40 11.31 L20.09 12.00 Z" fill="#d98a70" stroke="#5a2010" stroke-width="1"/><path d="M7.15 12.45 L6.74 14.00 L6.60 15.60 L6.74 17.20 L7.15 18.75 L7.83 20.20 L8.75 21.51 L9.89 22.65 L11.20 23.57 L12.65 24.25 L14.20 24.66 L14.83 21.11 L13.88 20.86 L13.00 20.45 L12.20 19.89 L11.51 19.20 L10.95 18.40 L10.54 17.52 L10.29 16.57 L10.20 15.60 L10.29 14.63 L10.54 13.68 Z" fill="#d98a70" stroke="#5a2010" stroke-width="1"/><path d="M17.40 24.66 L18.95 24.25 L20.40 23.57 L21.71 22.65 L22.85 21.51 L23.77 20.20 L24.45 18.75 L24.86 17.20 L25.00 15.60 L24.86 14.00 L24.45 12.45 L21.06 13.68 L21.31 14.63 L21.40 15.60 L21.31 16.57 L21.06 17.52 L20.65 18.40 L20.09 19.20 L19.40 19.89 L18.60 20.45 L17.72 20.86 L16.77 21.11 Z" fill="#d98a70" stroke="#5a2010" stroke-width="1"/></svg></div>
<div class="btn " style="left:841px;top:753px;width:34px;height:33px"><svg width="31" height="30" viewBox="0 0 31 30"><text x="6.4" y="12.4" style="font-family:'Liberation Sans',sans-serif;font-weight:bold;font-size:10.5px" fill="#111">M</text><circle cx="15.4" cy="15.8" r="2.1" fill="#e8101c"/><path d="M24.6 24.4 L20.4 20.4" stroke="#111" stroke-width="2"/><path d="M17.6 17.6 L23 19 L19.2 22.8 Z" fill="#111"/></svg></div>
<div class="btn " style="left:875px;top:753px;width:34px;height:33px"><svg width="31" height="30" viewBox="0 0 31 30"><path d="M11.8 24.4 L27 9.6" stroke="#111" stroke-width="1.4"/><path d="M10.6 8.4 L17.4 15.2" stroke="#111" stroke-width="1.3"/><path d="M8.6 9.6 L13.4 7.6 M9.8 6 L12 11" stroke="#111" stroke-width="1.2"/><path d="M19 17 L14.4 16.4 L18 12.6 Z" fill="#111"/><circle cx="19.6" cy="17.2" r="2.2" fill="#e8101c"/></svg></div>
<div class="btn " style="left:909px;top:753px;width:34px;height:33px"><svg width="31" height="30" viewBox="0 0 31 30"><path d="M19.6 19.6 L26 25.6" stroke="#111" stroke-width="3.4" stroke-linecap="square"/><circle cx="14" cy="13.8" r="7.4" fill="#f4f4f4" stroke="#111" stroke-width="1.5"/><path d="M10 13.8 H18 M14 9.8 V17.8" stroke="#e8101c" stroke-width="2.6"/><circle cx="14" cy="13.8" r="1.1" fill="#3a0000"/></svg></div>
<div class="btn " style="left:943px;top:753px;width:34px;height:33px"><svg width="31" height="30" viewBox="0 0 31 30"><path d="M7.6 15.6 H23.4 M15.4 7.6 V23.8" stroke="#111" stroke-width="1.4"/><path d="M10 15.6 H21 M15.4 11 V20.6" stroke="#e8101c" stroke-width="1.4"/><circle cx="15.4" cy="15.6" r="1.6" fill="#e8101c"/></svg></div>
<div class="btn " style="left:977px;top:753px;width:34px;height:33px"><svg width="31" height="30" viewBox="0 0 31 30"><circle cx="15.6" cy="15.6" r="9" fill="none" stroke="#111" stroke-width="1.4"/><path d="M8.2 15.6 H23 M15.6 8.2 V23" stroke="#e8101c" stroke-width="1.4"/><path d="M24.00 15.60 L21.40 17.16 L21.40 14.04 Z" fill="#e8101c"/><path d="M7.20 15.60 L9.80 14.04 L9.80 17.16 Z" fill="#e8101c"/><path d="M15.60 24.00 L14.04 21.40 L17.16 21.40 Z" fill="#e8101c"/><path d="M15.60 7.20 L17.16 9.80 L14.04 9.80 Z" fill="#e8101c"/></svg></div>
<div class="btn " style="left:1011px;top:753px;width:34px;height:33px"><svg width="31" height="30" viewBox="0 0 31 30"><rect x="8.2" y="7.2" width="14" height="17" fill="none" stroke="#111" stroke-width="1.4"/><path d="M8.8 24 C10.6 20.6 12.4 18.4 15.2 18.4 C18 18.4 19.8 20.6 21.6 24 Z" fill="#111"/><path d="M13 19.6 L15.2 16.6 L17.4 19.6 Z" fill="#e8101c"/><path d="M8.20 15.40 L6.10 11.20 L10.30 11.20 Z" fill="#111"/><path d="M22.20 15.40 L20.10 11.20 L24.30 11.20 Z" fill="#111"/></svg></div>
<div class="btn " style="left:1045px;top:753px;width:34px;height:33px"><svg width="31" height="30" viewBox="0 0 31 30"><circle cx="15.8" cy="15.6" r="8.8" fill="none" stroke="#d01828" stroke-width="1.3"/><circle cx="24.6" cy="15.6" r="1" fill="#3a0a0a"/><circle cx="22.9193" cy="20.7725" r="1" fill="#3a0a0a"/><circle cx="18.5193" cy="23.9693" r="1" fill="#3a0a0a"/><circle cx="13.0807" cy="23.9693" r="1" fill="#3a0a0a"/><circle cx="8.68065" cy="20.7725" r="1" fill="#3a0a0a"/><circle cx="7" cy="15.6" r="1" fill="#3a0a0a"/><circle cx="8.68065" cy="10.4275" r="1" fill="#3a0a0a"/><circle cx="13.0807" cy="7.2307" r="1" fill="#3a0a0a"/><circle cx="18.5193" cy="7.2307" r="1" fill="#3a0a0a"/><circle cx="22.9193" cy="10.4275" r="1" fill="#3a0a0a"/><path d="M13.2 15.6 H18.4 M15.8 13 V18.2" stroke="#0e3a2c" stroke-width="1.5"/></svg></div>
<div class="btn " style="left:1079px;top:753px;width:34px;height:33px"><svg width="31" height="30" viewBox="0 0 31 30"><rect x="7.4" y="8.6" width="16.8" height="14.6" fill="none" stroke="#111" stroke-width="1.3"/><path d="M15.2 9.4 V14.6 M12.6 11.6 L15.2 8.8 L17.8 11.6" fill="none" stroke="#d01838" stroke-width="1"/></svg></div>
<div class="btn " style="left:773px;top:794px;width:34px;height:33px"><svg width="31" height="30" viewBox="0 0 31 30"><path d="M15.2 12 L16.5 14.7 L19.2 16 L16.5 17.3 L15.2 20 L13.9 17.3 L11.2 16 L13.9 14.7 Z" fill="#0e5a3c" stroke="#0e5a3c" stroke-width="1.2" stroke-linejoin="round"/></svg></div>
<div class="btn " style="left:807px;top:794px;width:34px;height:33px"><svg width="31" height="30" viewBox="0 0 31 30"><path d="M9.4 22 L21.6 9.6" stroke="#111" stroke-width="1.5"/><circle cx="9.4" cy="22" r="1.9" fill="#0e5a3c"/><circle cx="21.6" cy="9.6" r="1.9" fill="#0e5a3c"/></svg></div>
<div class="btn " style="left:841px;top:794px;width:34px;height:33px"><svg width="31" height="30" viewBox="0 0 31 30"><circle cx="16" cy="15.8" r="9" fill="none" stroke="#0a2a20" stroke-width="1.4"/><circle cx="9.1056" cy="10.0149" r="1.8" fill="#0e5a3c"/><circle cx="22.8944" cy="10.0149" r="1.8" fill="#0e5a3c"/><circle cx="16" cy="24.8" r="1.8" fill="#0e5a3c"/></svg></div>
<div class="btn " style="left:875px;top:794px;width:34px;height:33px"><svg width="31" height="30" viewBox="0 0 31 30"><path d="M8.4 22.6 C7.6 14 12 8 19.6 8.2 C22.4 8.3 24.4 9.6 25.6 11.2" fill="none" stroke="#0a2a20" stroke-width="1.5"/><circle cx="8.4" cy="22.2" r="1.8" fill="#0e5a3c"/><circle cx="11.6" cy="10.4" r="1.6" fill="#0e5a3c"/><circle cx="25.6" cy="11.4" r="1.8" fill="#0e5a3c"/></svg></div>
<div class="btn " style="left:909px;top:794px;width:34px;height:33px"><svg width="31" height="30" viewBox="0 0 31 30"><ellipse cx="15.8" cy="16" rx="11" ry="6.4" fill="none" stroke="#0a2a20" stroke-width="1.4"/><circle cx="15.8" cy="9.6" r="1.7" fill="#0e5a3c"/><circle cx="15.8" cy="22.4" r="1.7" fill="#0e5a3c"/><circle cx="4.8" cy="16" r="1.7" fill="#0e5a3c"/><circle cx="26.8" cy="16" r="1.7" fill="#0e5a3c"/></svg></div>
<div class="btn " style="left:943px;top:794px;width:34px;height:33px"><svg width="31" height="30" viewBox="0 0 31 30"><rect x="6.8" y="9.6" width="19" height="13" fill="none" stroke="#0a2a20" stroke-width="1.4"/><circle cx="11.4" cy="9.6" r="1.7" fill="#0e5a3c"/><circle cx="21.4" cy="9.6" r="1.7" fill="#0e5a3c"/><circle cx="6.8" cy="16" r="1.7" fill="#0e5a3c"/><circle cx="25.8" cy="16" r="1.7" fill="#0e5a3c"/><circle cx="16.2" cy="22.6" r="1.7" fill="#0e5a3c"/></svg></div>
<div class="btn " style="left:977px;top:794px;width:34px;height:33px"><svg width="31" height="30" viewBox="0 0 31 30"><text x="11.2" y="14.6" style="font-family:'Liberation Sans',sans-serif;font-weight:bold;font-size:10.5px" fill="#111">D</text><path d="M8 20 H24.6" stroke="#111" stroke-width="1.3"/><path d="M5.8 17.4 V22.6 M26.8 17.4 V22.6" stroke="#0e5a3c" stroke-width="1.1"/><path d="M6.40 20.00 L9.60 18.40 L9.60 21.60 Z" fill="#111"/><path d="M26.20 20.00 L23.00 21.60 L23.00 18.40 Z" fill="#111"/></svg></div>
<div class="btn " style="left:1011px;top:794px;width:34px;height:33px"><svg width="31" height="30" viewBox="0 0 31 30"><path d="M6 22.2 L14 14.6" stroke="#111" stroke-width="1.2" stroke-dasharray="1.8 1.4"/><path d="M6 22.2 H13" stroke="#111" stroke-width="1.2" stroke-dasharray="1.8 1.4"/><path d="M14 14.6 L20.6 8.4 M13 22.2 H25.4" stroke="#111" stroke-width="1.4"/><path d="M16.6 12.8 C18.6 15.4 19.4 18.6 18.8 22" fill="none" stroke="#111" stroke-width="1.2"/><text x="20.4" y="19" style="font-family:'Liberation Sans',sans-serif;font-weight:bold;font-size:8.5px" fill="#111">A</text><circle cx="6" cy="22.2" r="1.7" fill="#0e5a3c"/><circle cx="20.8" cy="8.2" r="1.6" fill="#0e5a3c"/><circle cx="25.6" cy="22.2" r="1.7" fill="#0e5a3c"/></svg></div>
<div class="btn " style="left:1045px;top:794px;width:34px;height:33px"><svg width="31" height="30" viewBox="0 0 31 30"><circle cx="15.6" cy="16" r="6.8" fill="none" stroke="#0a4a30" stroke-width="3.8"/><circle cx="15.6" cy="16" r="8.8" fill="none" stroke="#062a1c" stroke-width="0.8"/><circle cx="15.6" cy="16" r="4.8" fill="none" stroke="#062a1c" stroke-width="0.8"/></svg></div>
<div class="btn " style="left:1079px;top:794px;width:34px;height:33px"><svg width="31" height="30" viewBox="0 0 31 30"><rect x="5" y="11" width="22" height="10.4" rx="5.2" fill="none" stroke="#0a2a20" stroke-width="1.4"/><circle cx="12" cy="11" r="1.7" fill="#0e5a3c"/><circle cx="20" cy="11" r="1.7" fill="#0e5a3c"/><circle cx="5" cy="16.2" r="1.7" fill="#0e5a3c"/><circle cx="27" cy="16.2" r="1.7" fill="#0e5a3c"/><circle cx="16" cy="21.4" r="1.7" fill="#0e5a3c"/></svg></div>
<div class="btn " style="left:773px;top:828px;width:34px;height:33px"><svg width="31" height="30" viewBox="0 0 31 30"><path d="M4 13.6 L18.8 10.6 L26 19.6 L10.6 24.4 Z" fill="#0e5a3c" stroke="#052014" stroke-width="1.2"/></svg></div>
<div class="btn " style="left:807px;top:828px;width:34px;height:33px"><svg width="31" height="30" viewBox="0 0 31 30"><path d="M6.6 21.8 C8 16.4 10 11.6 12.2 13.2 C15 15.4 17 23 19.8 22 C22 21.2 23.2 17.4 24.6 14.8" fill="none" stroke="#0a2a20" stroke-width="1.6"/><circle cx="6.6" cy="21.8" r="1.9" fill="#0e5a3c"/><circle cx="11.4" cy="13.4" r="1.6" fill="#0e5a3c"/><circle cx="20" cy="22.2" r="1.6" fill="#0e5a3c"/><circle cx="24.8" cy="14.8" r="1.9" fill="#0e5a3c"/></svg></div>
<div class="btn " style="left:841px;top:828px;width:34px;height:33px"><svg width="31" height="30" viewBox="0 0 31 30"><path d="M6.8 14 C8.6 10.6 11.6 13.6 13.6 11.4 C15.6 9 17.6 8.6 20.4 9.6 C23.4 8.8 25.8 10.8 24.6 13.6 C23.6 16.6 22.4 17.4 20 18.4 C17.6 19.4 18.6 22 17.6 24.4 C16.4 26.4 13 25.4 11.6 23 C10.4 20.8 7.4 20.6 6.6 18 C6 16.4 6.2 15.2 6.8 14 Z" fill="none" stroke="#0a2a20" stroke-width="1.5"/><circle cx="7.2" cy="13.6" r="1.7" fill="#0e5a3c"/><circle cx="17.8" cy="9.4" r="1.7" fill="#0e5a3c"/><circle cx="24.8" cy="11" r="1.7" fill="#0e5a3c"/><circle cx="21.6" cy="17.8" r="1.7" fill="#0e5a3c"/><circle cx="14.6" cy="25.2" r="1.7" fill="#0e5a3c"/></svg></div>
<div class="btn " style="left:875px;top:828px;width:34px;height:33px"><svg width="31" height="30" viewBox="0 0 31 30"><path d="M11 7.5 L11.532 8.868 L12.9 9.4 L11.532 9.932 L11 11.3 L10.468 9.932 L9.1 9.4 L10.468 8.868 Z" fill="#0e5a3c"/><path d="M18.6 6.3 L19.132 7.668 L20.5 8.2 L19.132 8.732 L18.6 10.1 L18.068 8.732 L16.7 8.2 L18.068 7.668 Z" fill="#0e5a3c"/><path d="M23 10.7 L23.532 12.068 L24.9 12.6 L23.532 13.132 L23 14.5 L22.468 13.132 L21.1 12.6 L22.468 12.068 Z" fill="#0e5a3c"/><path d="M15.6 14.5 L16.132 15.868 L17.5 16.4 L16.132 16.932 L15.6 18.3 L15.068 16.932 L13.7 16.4 L15.068 15.868 Z" fill="#0e5a3c"/><path d="M8.4 17.1 L8.932 18.468 L10.3 19 L8.932 19.532 L8.4 20.9 L7.868 19.532 L6.5 19 L7.868 18.468 Z" fill="#0e5a3c"/><path d="M20.4 21.1 L20.932 22.468 L22.3 23 L20.932 23.532 L20.4 24.9 L19.868 23.532 L18.5 23 L19.868 22.468 Z" fill="#0e5a3c"/></svg></div>
<div class="btn " style="left:909px;top:828px;width:34px;height:33px"><svg width="31" height="30" viewBox="0 0 31 30"><rect x="7.4" y="4.4" width="17.4" height="22.8" rx="2" fill="#8a9a94" stroke="#3a4a44" stroke-width="1"/><rect x="9.6" y="6.6" width="13" height="5" fill="#0e5a3c"/><rect x="9.4" y="13.6" width="6" height="5.4" fill="#e8ece8"/><rect x="16.8" y="13.6" width="6" height="5.4" fill="#e8ece8"/><rect x="9.4" y="20.4" width="6" height="5.4" fill="#e8ece8"/><rect x="16.8" y="20.4" width="6" height="5.4" fill="#e84a40"/><path d="M10.6 16.3 H14.2 M12.4 14.6 V18" stroke="#2a3a34" stroke-width="1.3"/><path d="M18 16.3 H21.6" stroke="#2a3a34" stroke-width="1.4"/><path d="M10.8 21.6 L14 24.8 M14 21.6 L10.8 24.8" stroke="#5a6a64" stroke-width="1.1"/><path d="M18 22.2 H21.6 M18 24.2 H21.6" stroke="#fff" stroke-width="1.1"/></svg></div>
<div class="btn " style="left:773px;top:869px;width:44px;height:33px"><svg width="41" height="30" viewBox="0 0 41 30"><path d="M12.4 19.4 V8.6" stroke="#0e6a4a" stroke-width="2"/><path d="M12.4 4.8 L15.1 9.6 H9.7 Z" fill="#0e6a4a"/><path d="M12 19.4 H22.4" stroke="#e8101c" stroke-width="2.2"/><path d="M26.4 19.4 L21.4 16.7 V22.1 Z" fill="#e8101c"/><path d="M12.4 19.4 L8.8 23.2" stroke="#111" stroke-width="2"/><path d="M6 26.4 L7 21.2 L11 25.2 Z" fill="#111"/><text x="17" y="15" style="font-family:'Liberation Sans',sans-serif;font-weight:bold;font-size:12px" fill="#111">O</text></svg><i class="dd" style="left:34.2px;top:14.6px"></i></div>
<div class="btn " style="left:818px;top:869px;width:44px;height:33px"><svg width="41" height="30" viewBox="0 0 41 30"><path d="M12.4 19.4 V8.6" stroke="#0e6a4a" stroke-width="2"/><path d="M12.4 4.8 L15.1 9.6 H9.7 Z" fill="#0e6a4a"/><path d="M12 19.4 H22.4" stroke="#e8101c" stroke-width="2.2"/><path d="M26.4 19.4 L21.4 16.7 V22.1 Z" fill="#e8101c"/><path d="M12.4 19.4 L8.8 23.2" stroke="#111" stroke-width="2"/><path d="M6 26.4 L7 21.2 L11 25.2 Z" fill="#111"/><text x="17.6" y="15" style="font-family:'Liberation Sans',sans-serif;font-weight:bold;font-size:12px" fill="#111">L</text></svg><i class="dd" style="left:34.2px;top:14.6px"></i></div>
<div class="btn " style="left:863px;top:869px;width:34px;height:33px"><svg width="31" height="30" viewBox="0 0 31 30"><path d="M11.4 19.4 V8.6" stroke="#0e6a4a" stroke-width="2"/><path d="M11.4 4.8 L14.1 9.6 H8.7 Z" fill="#0e6a4a"/><path d="M11 19.4 H21.4" stroke="#e8101c" stroke-width="2.2"/><path d="M25.4 19.4 L20.4 16.7 V22.1 Z" fill="#e8101c"/><path d="M11.4 19.4 L7.8 23.2" stroke="#111" stroke-width="2"/><path d="M5 26.4 L6 21.2 L10 25.2 Z" fill="#111"/><path d="M14.4 4.6 H23.8 V15.8 H14.4 Z" fill="#111"/><rect x="16.2" y="5.8" width="5.8" height="3.6" fill="#f0f0f0"/><rect x="16.8" y="12.2" width="4.6" height="3.6" fill="#f0f0f0"/><rect x="17.4" y="13" width="1.3" height="2.2" fill="#111"/></svg></div>
<div class="btn " style="left:773px;top:903px;width:34px;height:33px"><svg width="31" height="30" viewBox="0 0 31 30"><path d="M11.8 19.4 V8.6" stroke="#0e6a4a" stroke-width="2"/><path d="M11.8 4.8 L14.5 9.6 H9.1 Z" fill="#0e6a4a"/><path d="M11.4 19.4 H21.8" stroke="#e8101c" stroke-width="2.2"/><path d="M25.8 19.4 L20.8 16.7 V22.1 Z" fill="#e8101c"/><path d="M11.8 19.4 L8.2 23.2" stroke="#111" stroke-width="2"/><path d="M5.4 26.4 L6.4 21.2 L10.4 25.2 Z" fill="#111"/><path d="M23.4 14.4 A5 5 0 1 0 18 15.8" fill="none" stroke="#111" stroke-width="1.2"/><path d="M25.2 11.6 L24.6 16.4 L20.6 14.6 Z" fill="#111"/></svg></div>
<div class="btn " style="left:917px;top:869px;width:34px;height:33px"><svg width="31" height="30" viewBox="0 0 31 30"><path d="M4.6 5 H9.8 V3 L14.4 6.4 L9.8 9.8 V7.8 H4.6 Z" fill="#e8101c"/><rect x="15.6" y="12.6" width="10.4" height="13" fill="#fff" stroke="#1e7a4a" stroke-width="0.9"/><path d="M19 14.8 H24.8" stroke="#1e7a4a" stroke-width="1.1"/><path d="M19 17.1 H24.8" stroke="#1e7a4a" stroke-width="1.1"/><path d="M19 19.4 H24.8" stroke="#1e7a4a" stroke-width="1.1"/><path d="M19 21.7 H24.8" stroke="#1e7a4a" stroke-width="1.1"/><path d="M19 24 H24.8" stroke="#1e7a4a" stroke-width="1.1"/><path d="M5.6 13 L17.6 11 V27.4 L5.6 25.4 Z" fill="#1e7a4a"/><text x="11.4" y="22.4" text-anchor="middle" style="font-family:'Liberation Sans',sans-serif;font-weight:bold;font-size:9px" fill="#fff">X</text></svg></div>
<div class="btn " style="left:951px;top:869px;width:34px;height:33px"><svg width="31" height="30" viewBox="0 0 31 30"><path d="M4.6 5 H9.8 V3 L14.4 6.4 L9.8 9.8 V7.8 H4.6 Z" fill="#e8101c"/><rect x="15.6" y="12.6" width="10.4" height="13" fill="#fff" stroke="#2a56a8" stroke-width="0.9"/><path d="M19 14.8 H24.8" stroke="#2a56a8" stroke-width="1.1"/><path d="M19 17.1 H24.8" stroke="#2a56a8" stroke-width="1.1"/><path d="M19 19.4 H24.8" stroke="#2a56a8" stroke-width="1.1"/><path d="M19 21.7 H24.8" stroke="#2a56a8" stroke-width="1.1"/><path d="M19 24 H24.8" stroke="#2a56a8" stroke-width="1.1"/><path d="M5.6 13 L17.6 11 V27.4 L5.6 25.4 Z" fill="#2a56a8"/><text x="11.4" y="22.4" text-anchor="middle" style="font-family:'Liberation Sans',sans-serif;font-weight:bold;font-size:9px" fill="#fff">W</text></svg></div>
<div class="btn " style="left:985px;top:869px;width:34px;height:33px"><svg width="31" height="30" viewBox="0 0 31 30"><path d="M4.6 5 H9.8 V3 L14.4 6.4 L9.8 9.8 V7.8 H4.6 Z" fill="#e8101c"/><rect x="12" y="12.6" width="13.4" height="12.4" fill="#2a9a7a"/><path d="M12 12.6 H18 L25.4 25 H19 Z" fill="#5a6a64"/><path d="M15 15 H24 M15 18 H24 M17 21 H24" stroke="#d8ece6" stroke-width="1" opacity="0.7"/><text x="5.4" y="24.4" style="font-family:'Liberation Sans',sans-serif;font-weight:bold;font-size:14px" fill="#2a9a7a">A</text><path d="M5.6 26.4 H13.4" stroke="#2a9a7a" stroke-width="1.6"/></svg></div>
<div class="btn " style="left:917px;top:903px;width:34px;height:33px"><svg width="31" height="30" viewBox="0 0 31 30"><path d="M4.6 5 H9.8 V3 L14.4 6.4 L9.8 9.8 V7.8 H4.6 Z" fill="#e8101c"/><rect x="6.8" y="13" width="18.4" height="13.8" fill="#fff" stroke="#111" stroke-width="1.5"/><text x="16" y="19.6" text-anchor="middle" style="font-family:'Liberation Sans',sans-serif;font-weight:bold;font-size:7px;letter-spacing:0.2px" fill="#111">TXT</text><path d="M9.6 21.2 H22.6 M9.6 23.2 H22.6 M9.6 25.2 H22.6" stroke="#333" stroke-width="1"/></svg></div>
<div class="btn " style="left:951px;top:903px;width:34px;height:33px"><svg width="31" height="30" viewBox="0 0 31 30"><path d="M4.6 5 H9.8 V3 L14.4 6.4 L9.8 9.8 V7.8 H4.6 Z" fill="#e8101c"/><rect x="7.6" y="12" width="16.4" height="13" fill="#f4f4f4"/><path d="M12.8 12.4 C13.4 16 15 19.4 22.6 21.6 M10 22.2 C13.6 20.4 15.6 17.6 14.4 12.6" fill="none" stroke="#d82830" stroke-width="1.1"/><rect x="7.4" y="22.4" width="17" height="4.4" fill="#e02028"/><text x="16" y="26.4" text-anchor="middle" style="font-family:'Liberation Sans',sans-serif;font-weight:bold;font-size:4.6px" fill="#fff">PDF</text></svg></div>
<div class="btn " style="left:985px;top:903px;width:34px;height:33px"><svg width="31" height="30" viewBox="0 0 31 30"><path d="M13.71 5.53 L13.71 7.27 L12.23 7.66 L12.30 7.51 L13.07 8.83 L11.83 10.07 L10.51 9.30 L10.67 9.23 L10.27 10.71 L8.53 10.71 L8.14 9.23 L8.29 9.30 L6.97 10.07 L5.73 8.83 L6.50 7.51 L6.57 7.67 L5.09 7.27 L5.09 5.53 L6.57 5.14 L6.50 5.29 L5.73 3.97 L6.97 2.73 L8.29 3.50 L8.13 3.57 L8.53 2.09 L10.27 2.09 L10.66 3.57 L10.51 3.50 L11.83 2.73 L13.07 3.97 L12.30 5.29 L12.23 5.13Z" fill="#e8101c"/><circle cx="9.4" cy="6.4" r="1.9" fill="#f0f0f0"/><rect x="15.8" y="12.6" width="10.4" height="13" fill="#fff" stroke="#1e7a4a" stroke-width="0.9"/><path d="M19.2 14.8 H25" stroke="#1e7a4a" stroke-width="1.1"/><path d="M19.2 17.1 H25" stroke="#1e7a4a" stroke-width="1.1"/><path d="M19.2 19.4 H25" stroke="#1e7a4a" stroke-width="1.1"/><path d="M19.2 21.7 H25" stroke="#1e7a4a" stroke-width="1.1"/><path d="M19.2 24 H25" stroke="#1e7a4a" stroke-width="1.1"/><path d="M5.8 13 L17.8 11 V27.4 L5.8 25.4 Z" fill="#1e7a4a"/><text x="11.6" y="22.4" text-anchor="middle" style="font-family:'Liberation Sans',sans-serif;font-weight:bold;font-size:9px" fill="#fff">X</text></svg></div>
<div class="btn " style="left:917px;top:937px;width:34px;height:33px"><svg width="31" height="30" viewBox="0 0 31 30"><path d="M12.71 5.73 L12.71 7.47 L11.23 7.86 L11.30 7.71 L12.07 9.03 L10.83 10.27 L9.51 9.50 L9.67 9.43 L9.27 10.91 L7.53 10.91 L7.14 9.43 L7.29 9.50 L5.97 10.27 L4.73 9.03 L5.50 7.71 L5.57 7.87 L4.09 7.47 L4.09 5.73 L5.57 5.34 L5.50 5.49 L4.73 4.17 L5.97 2.93 L7.29 3.70 L7.13 3.77 L7.53 2.29 L9.27 2.29 L9.66 3.77 L9.51 3.70 L10.83 2.93 L12.07 4.17 L11.30 5.49 L11.23 5.33Z" fill="#e8101c"/><circle cx="8.4" cy="6.6" r="1.9" fill="#f0f0f0"/><rect x="6.8" y="13" width="18.4" height="13.8" fill="#fff" stroke="#111" stroke-width="1.5"/><text x="16" y="19.6" text-anchor="middle" style="font-family:'Liberation Sans',sans-serif;font-weight:bold;font-size:7px;letter-spacing:0.2px" fill="#111">TXT</text><path d="M9.6 21.2 H22.6 M9.6 23.2 H22.6 M9.6 25.2 H22.6" stroke="#333" stroke-width="1"/></svg></div>
<div class="btn " style="left:1036px;top:869px;width:34px;height:33px"><svg width="31" height="30" viewBox="0 0 31 30"><rect x="5.4" y="8.6" width="6.6" height="13.6" fill="#f01010"/><rect x="12" y="8.6" width="6.4" height="13.6" fill="#10e820"/><rect x="18.4" y="8.6" width="6.4" height="13.6" fill="#1010f0"/></svg></div>
<div class="btn " style="left:1070px;top:869px;width:45px;height:33px"><svg width="42" height="30" viewBox="0 0 42 30"><path d="M7.4 11.4 V7 H12 M20 7 H24.6 V11.4 M24.6 20 V24.4 H20 M12 24.4 H7.4 V20" fill="none" stroke="#111" stroke-width="1.8"/><path d="M7.4 15.8 H25 M16.2 6.6 V25" stroke="#e4505a" stroke-width="1.1"/></svg><i class="dd" style="left:35.2px;top:14.6px"></i></div>
<div class="btn " style="left:1036px;top:903px;width:45px;height:33px"><svg width="42" height="30" viewBox="0 0 42 30"><path d="M5 14 L16.4 4.8 L27.8 14 Z" fill="#f01018"/><rect x="21.8" y="6.4" width="3" height="5" fill="#111"/><rect x="7.6" y="14" width="17.2" height="12.4" fill="#111"/><rect x="9.2" y="17" width="3" height="3" fill="#f4f4f4"/><rect x="13.2" y="17" width="3" height="3" fill="#f4f4f4"/><rect x="9.2" y="21" width="3" height="3" fill="#f4f4f4"/><rect x="13.2" y="21" width="3" height="3" fill="#f4f4f4"/><rect x="18.4" y="18" width="4.6" height="6.8" fill="#f4f4f4"/></svg><i class="dd" style="left:35.2px;top:14.6px"></i></div>
<div class="abs" style="left:0;top:1021px;width:1919px;height:1px;background:#d9d9d9"></div>
<div class="abs" style="left:0;top:1022px;width:1919px;height:18px;background:#f0f0f0"></div>
<div class="abs" style="left:1121px;top:1022px;width:798px;height:18px;background:#f5f5f5"></div>
<div class="abs" style="left:671px;top:1024px;width:1px;height:15px;background:#d4d4d4"></div>
<div class="abs" style="left:777px;top:1024px;width:1px;height:15px;background:#d4d4d4"></div>
<div class="abs" style="left:883px;top:1024px;width:1px;height:15px;background:#d4d4d4"></div>
<div class="abs" style="left:989px;top:1024px;width:1px;height:15px;background:#d4d4d4"></div>
<div class="abs" style="left:1045px;top:1024px;width:1px;height:15px;background:#d4d4d4"></div>
<div class="abs" style="left:1227px;top:1024px;width:1px;height:15px;background:#d4d4d4"></div>
<div class="abs" style="left:1373px;top:1024px;width:1px;height:15px;background:#d4d4d4"></div>
<div class="abs" style="left:1479px;top:1024px;width:1px;height:15px;background:#d4d4d4"></div>
<div class="t" style="left:676px;top:1025.5px;font-size:11.3px;letter-spacing:0.190px;">4.0</div>
<div class="t" style="left:782px;top:1025.5px;font-size:11.3px;letter-spacing:-1.937px;">TCS</div>
<div class="t" style="left:888.5px;top:1025.5px;font-size:11.3px;letter-spacing:-0.152px;">CS Mode 2</div>
<div class="t" style="left:994.3px;top:1025.5px;font-size:11.3px;letter-spacing:-0.722px;">mm</div>
<div class="t" style="left:1050.3px;top:1025.5px;font-size:11.3px;letter-spacing:-0.030px;">DD</div>
<div class="t" style="left:1126.5px;top:1025.5px;font-size:11.3px;letter-spacing:-0.857px;">CARTESIAN</div>
<div class="t" style="left:1232.5px;top:1025.5px;font-size:11.3px;letter-spacing:0.256px;">Connected</div>
<div class="t" style="left:1378.3px;top:1025.5px;font-size:11.3px;letter-spacing:0.281px;">Not Recording</div>
<div class="abs" style="left:0;top:1039px;width:1919px;height:1px;background:#fdfdfd"></div>
<div class="abs" style="left:0;top:1040px;width:1919px;height:8px;background:linear-gradient(to right,#2c383d,#232f36)"></div>
<div class="abs" style="left:343px;top:1040px;width:48px;height:8px;background:#525e64"></div>
<div class="abs" style="left:1915.5px;top:1040px;width:1px;height:8px;background:#6c787e"></div>
<div class="t" style="left:1816px;top:1044.5px;font-size:11.5px;color:#fff">15:39</div>
<div class="abs" style="left:1121px;top:46px;width:601px;height:180px;background:#f0f0f0;border:1px solid #111"></div><div class="abs" style="left:1126px;top:56px;width:44px;height:44px;background:#fff;border:1px solid #5a5a5a"></div><div class="t" style="left:1139.5px;top:64px;font-size:26px;font-weight:bold;color:#0c2a8c;letter-spacing:-0.3px">X<span style="font-size:12px;margin-left:2.2px">0</span></div><div class="abs" style="left:1174px;top:58px;width:496px;height:41px;background:#000;border-bottom:1px solid #8a8a8a;border-right:1px solid #8a8a8a"></div><div class="t" style="right:254px;top:57px;font-size:35px;font-weight:bold;color:#f4f41e;letter-spacing:-0.35px">0.085</div><div class="abs" style="left:1673px;top:56px;width:44px;height:44px;background:#fff;border:1px solid #8a8a8a"></div><div class="t" style="left:1674px;top:62px;width:43px;text-align:center;font-size:14px;font-weight:bold;color:#0c2a8c;line-height:15px">X</div><div class="abs" style="left:1686px;top:77px;width:18px;height:2px;background:#0c2a8c"></div><div class="t" style="left:1674px;top:80px;width:43px;text-align:center;font-size:14px;font-weight:bold;color:#0c2a8c;line-height:15px">2</div><div class="abs" style="left:1126px;top:105px;width:44px;height:44px;background:#fff;border:1px solid #5a5a5a"></div><div class="t" style="left:1139.5px;top:113px;font-size:26px;font-weight:bold;color:#0c2a8c;letter-spacing:-0.3px">Y<span style="font-size:12px;margin-left:2.2px">0</span></div><div class="abs" style="left:1174px;top:107px;width:496px;height:41px;background:#000;border-bottom:1px solid #8a8a8a;border-right:1px solid #8a8a8a"></div><div class="t" style="right:254px;top:106px;font-size:35px;font-weight:bold;color:#f4f41e;letter-spacing:-0.35px">-0.130</div><div class="abs" style="left:1673px;top:105px;width:44px;height:44px;background:#fff;border:1px solid #8a8a8a"></div><div class="t" style="left:1674px;top:111px;width:43px;text-align:center;font-size:14px;font-weight:bold;color:#0c2a8c;line-height:15px">Y</div><div class="abs" style="left:1686px;top:126px;width:18px;height:2px;background:#0c2a8c"></div><div class="t" style="left:1674px;top:129px;width:43px;text-align:center;font-size:14px;font-weight:bold;color:#0c2a8c;line-height:15px">2</div><div class="abs" style="left:1126px;top:154px;width:44px;height:44px;background:#fff;border:1px solid #5a5a5a"></div><div class="t" style="left:1139.5px;top:162px;font-size:26px;font-weight:bold;color:#0c2a8c;letter-spacing:-0.3px">Z<span style="font-size:12px;margin-left:2.2px">0</span></div><div class="abs" style="left:1174px;top:156px;width:496px;height:41px;background:#000;border-bottom:1px solid #8a8a8a;border-right:1px solid #8a8a8a"></div><div class="t" style="right:254px;top:155px;font-size:35px;font-weight:bold;color:#f4f41e;letter-spacing:-0.35px">0.000</div><div class="abs" style="left:1673px;top:154px;width:44px;height:44px;background:#fff;border:1px solid #8a8a8a"></div><div class="t" style="left:1674px;top:160px;width:43px;text-align:center;font-size:14px;font-weight:bold;color:#0c2a8c;line-height:15px">Z</div><div class="abs" style="left:1686px;top:175px;width:18px;height:2px;background:#0c2a8c"></div><div class="t" style="left:1674px;top:178px;width:43px;text-align:center;font-size:14px;font-weight:bold;color:#0c2a8c;line-height:15px">2</div><div class="abs" style="left:1726px;top:46px;width:190px;height:180px;background:#f0f0f0;border:1px solid #4a4a4a"></div><svg class="abs" style="left:1726px;top:46px" width="193" height="180" viewBox="1726 46 193 180"><rect x="1729" y="49" width="139" height="135" fill="#000"/><circle cx="1798.3" cy="116.4" r="66.6" fill="#6c6c6c" stroke="#1a1ae4" stroke-width="2.2"/><circle cx="1798.3" cy="116.4" r="33.4" fill="none" stroke="#2a2ae0" stroke-width="0.9"/><circle cx="1798.3" cy="116.4" r="31.6" fill="#00cccc" stroke="#e0102c" stroke-width="2"/><path d="M1749 52.5 Q1740 55.5 1737.6 64" fill="none" stroke="#3a96f0" stroke-width="3.2"/><path d="M1732.6 60.4 L1736.6 69 L1743.6 62.6Z" fill="#3a96f0"/><path d="M1848 52.5 Q1857 55.5 1859.4 64" fill="none" stroke="#3a96f0" stroke-width="3.2"/><path d="M1853.4 62.6 L1860.4 69 L1864.4 60.4Z" fill="#3a96f0"/><rect x="1883.5" y="50.5" width="12" height="12" fill="#fff" stroke="#333"/><path d="M1886 56.5 L1888.6 59.5 L1893.5 53" fill="none" stroke="#222" stroke-width="1.2"/><rect x="1889.5" y="94" width="3.4" height="57" fill="#e6e6e6" stroke="#d4d4d4" stroke-width="0.6"/><rect x="1880" y="83.8" width="21" height="10.2" fill="#0a78d8"/><rect x="1871.5" y="160.5" width="38" height="22" fill="#e3e3e3" stroke="#adadad"/><rect x="1730.2" y="186.8" width="33.4" height="33.4" fill="none" stroke="#ee8c1e" stroke-width="1.5"/><circle cx="1747.1" cy="204.2" r="13.6" fill="#148cf0" stroke="#222" stroke-width="1"/><circle cx="1747.1" cy="204.2" r="5" fill="#fff" stroke="#222" stroke-width="0.9"/><circle cx="1782.9" cy="204.2" r="13.6" fill="#fff" stroke="#222" stroke-width="1.15"/><circle cx="1782.9" cy="204.2" r="7" fill="none" stroke="#148cf0" stroke-width="3.6"/><circle cx="1782.9" cy="204.2" r="8.9" fill="none" stroke="#222" stroke-width="0.8"/><circle cx="1782.9" cy="204.2" r="5.1" fill="#fff" stroke="#222" stroke-width="0.8"/><circle cx="1819.2" cy="204.2" r="13.6" fill="#fff" stroke="#222" stroke-width="1.15"/><path d="M1819.2 204.2 L1809.94 194.94 A13.1 13.1 0 0 1 1819.20 191.10 Z" fill="#148cf0"/><path d="M1819.2 204.2 L1819.20 217.30 A13.1 13.1 0 0 1 1809.94 213.46 Z" fill="#148cf0"/><path d="M1819.2 204.2 L1832.30 204.20 A13.1 13.1 0 0 1 1828.46 213.46 Z" fill="#148cf0"/><path d="M1819.2 204.2 L1832.60 204.20" stroke="#222" stroke-width="1"/><path d="M1819.2 204.2 L1828.68 213.68" stroke="#222" stroke-width="1"/><path d="M1819.2 204.2 L1819.20 217.60" stroke="#222" stroke-width="1"/><path d="M1819.2 204.2 L1809.72 213.68" stroke="#222" stroke-width="1"/><path d="M1819.2 204.2 L1805.80 204.20" stroke="#222" stroke-width="1"/><path d="M1819.2 204.2 L1809.72 194.72" stroke="#222" stroke-width="1"/><path d="M1819.2 204.2 L1819.20 190.80" stroke="#222" stroke-width="1"/><path d="M1819.2 204.2 L1828.68 194.72" stroke="#222" stroke-width="1"/><circle cx="1819.2" cy="204.2" r="4" fill="#fff" stroke="#222" stroke-width="0.9"/><circle cx="1854.9" cy="204.2" r="13.6" fill="#fff" stroke="#222" stroke-width="1.15"/><path d="M1854.90 192.80 A11.4 11.4 0 0 1 1862.96 196.14" fill="none" stroke="#148cf0" stroke-width="3.6"/><path d="M1843.50 204.20 A11.4 11.4 0 0 1 1846.84 196.14" fill="none" stroke="#148cf0" stroke-width="3.6"/><path d="M1854.90 215.60 A11.4 11.4 0 0 1 1846.84 212.26" fill="none" stroke="#148cf0" stroke-width="3.6"/><path d="M1866.30 204.20 A11.4 11.4 0 0 1 1862.96 212.26" fill="none" stroke="#148cf0" stroke-width="3.6"/><circle cx="1854.9" cy="204.2" r="9.4" fill="none" stroke="#222" stroke-width="1"/><path d="M1859.30 204.20 L1868.30 204.20" stroke="#222" stroke-width="1"/><path d="M1858.01 207.31 L1864.38 213.68" stroke="#222" stroke-width="1"/><path d="M1854.90 208.60 L1854.90 217.60" stroke="#222" stroke-width="1"/><path d="M1851.79 207.31 L1845.42 213.68" stroke="#222" stroke-width="1"/><path d="M1850.50 204.20 L1841.50 204.20" stroke="#222" stroke-width="1"/><path d="M1851.79 201.09 L1845.42 194.72" stroke="#222" stroke-width="1"/><path d="M1854.90 199.80 L1854.90 190.80" stroke="#222" stroke-width="1"/><path d="M1858.01 201.09 L1864.38 194.72" stroke="#222" stroke-width="1"/><circle cx="1854.9" cy="204.2" r="4.4" fill="#fff" stroke="#222" stroke-width="1"/><circle cx="1891" cy="204.2" r="13.6" fill="#fff" stroke="#222" stroke-width="1.15"/><circle cx="1891" cy="204.2" r="6.8" fill="#148cf0" stroke="#222" stroke-width="0.8"/></svg><div class="t" style="left:1881px;top:64.5px;font-size:11.4px;letter-spacing:-0.4px">200</div><div class="t" style="left:1871.5px;top:164.5px;width:38px;text-align:center;font-size:12px;letter-spacing:-0.5px">OFF</div>
<div class="t" style="left:1126px;top:232px;font-size:12.8px;text-decoration:underline">ANG1</div><div class="t" style="left:1510px;top:232px;font-size:12.85px">Ref Coordinate System:<span style="color:#f37cf0;text-decoration:underline">TCS</span></div><div class="abs" style="left:1121px;top:247px;width:798px;height:180px;background:#fff;border:1px solid #7c7c7c;border-right:none"></div><div class="abs" style="left:1122px;top:248px;width:797px;height:24px;background:#f0f0f0;border-bottom:1px solid #e6e6e6"></div><div class="t" style="left:1122px;top:254px;width:113px;text-align:center;font-size:11px">Content</div><div class="abs" style="left:1235px;top:248px;width:1px;height:178px;background:#ececec"></div><div class="t" style="left:1235px;top:254px;width:113px;text-align:center;font-size:11px">Actual</div><div class="abs" style="left:1348px;top:248px;width:1px;height:178px;background:#ececec"></div><div class="t" style="left:1348px;top:254px;width:113px;text-align:center;font-size:11px">Nominal</div><div class="abs" style="left:1461px;top:248px;width:1px;height:178px;background:#ececec"></div><div class="t" style="left:1461px;top:254px;width:113px;text-align:center;font-size:11px">Over</div><div class="abs" style="left:1574px;top:248px;width:1px;height:178px;background:#ececec"></div><div class="t" style="left:1574px;top:254px;width:113px;text-align:center;font-size:11px">UpTol</div><div class="abs" style="left:1687px;top:248px;width:1px;height:178px;background:#ececec"></div><div class="t" style="left:1687px;top:254px;width:113px;text-align:center;font-size:11px">LowTol</div><div class="abs" style="left:1800px;top:248px;width:1px;height:178px;background:#ececec"></div><div class="t" style="left:1800px;top:254px;width:113px;text-align:center;font-size:11px">State</div><div class="abs" style="left:1913px;top:248px;width:1px;height:178px;background:#ececec"></div><div class="abs" style="left:1123px;top:287px;width:790px;height:1px;background:#f2f2f2"></div><div class="abs" style="left:1123px;top:303px;width:790px;height:1px;background:#f2f2f2"></div><div class="abs" style="left:1123px;top:319px;width:790px;height:1px;background:#f2f2f2"></div><div class="abs" style="left:1123px;top:335px;width:790px;height:1px;background:#f2f2f2"></div><div class="abs" style="left:1123px;top:351px;width:790px;height:1px;background:#f2f2f2"></div><div class="abs" style="left:1123px;top:367px;width:790px;height:1px;background:#f2f2f2"></div><div class="abs" style="left:1123px;top:383px;width:790px;height:1px;background:#f2f2f2"></div><div class="abs" style="left:1123px;top:399px;width:790px;height:1px;background:#f2f2f2"></div><div class="abs" style="left:1123px;top:415px;width:790px;height:1px;background:#f2f2f2"></div><svg class="abs" style="left:1127px;top:274px" width="12" height="12" viewBox="0 0 12 12"><rect x="0.5" y="0.5" width="11" height="11" fill="#fff" stroke="#1a1a1a" stroke-width="1"/><path d="M2.4 5.90769 L4.8 8.86154 L9.96923 2.4" fill="none" stroke="#111" stroke-width="1.84615"/></svg><div class="t" style="left:1141px;top:273px;font-size:12px">X</div><div class="t" style="right:571px;top:273px;font-size:12px">-0.120</div><div class="t" style="right:458px;top:273px;font-size:12px">-0.120</div><div class="t" style="right:345px;top:273px;font-size:12px">0.000</div><svg class="abs" style="left:1127px;top:290px" width="12" height="12" viewBox="0 0 12 12"><rect x="0.5" y="0.5" width="11" height="11" fill="#fff" stroke="#1a1a1a" stroke-width="1"/><path d="M2.4 5.90769 L4.8 8.86154 L9.96923 2.4" fill="none" stroke="#111" stroke-width="1.84615"/></svg><div class="t" style="left:1141px;top:289px;font-size:12px">Y</div><div class="t" style="right:571px;top:289px;font-size:12px">-0.121</div><div class="t" style="right:458px;top:289px;font-size:12px">-0.121</div><div class="t" style="right:345px;top:289px;font-size:12px">0.000</div><svg class="abs" style="left:1127px;top:306px" width="12" height="12" viewBox="0 0 12 12"><rect x="0.5" y="0.5" width="11" height="11" fill="#fff" stroke="#1a1a1a" stroke-width="1"/><path d="M2.4 5.90769 L4.8 8.86154 L9.96923 2.4" fill="none" stroke="#111" stroke-width="1.84615"/></svg><div class="t" style="left:1141px;top:305px;font-size:12px">Angle</div><div class="t" style="right:571px;top:305px;font-size:12px">45.069</div><div class="t" style="right:458px;top:305px;font-size:12px">45.069</div><div class="t" style="right:345px;top:305px;font-size:12px">0.000</div><div class="abs" style="left:1121px;top:427px;width:798px;height:23px;background:linear-gradient(to right,#dadada,#e4e4e4 50%,#ededed)"></div><svg class="abs" style="left:1121px;top:429.3px" width="13" height="13" viewBox="0 0 13 13"><rect x="0.5" y="0.5" width="12" height="12" fill="#fff" stroke="#1a1a1a" stroke-width="1"/></svg><div class="t" style="left:1137.4px;top:430px;font-size:11px;letter-spacing:0.05px">Show All</div>
<svg class="abs" style="left:1122px;top:450px" width="762" height="569" viewBox="1122 450 762 569"><defs><radialGradient id="vg" cx="0.5" cy="0.5" r="0.72"><stop offset="0" stop-color="#3fe00a"/><stop offset="0.5" stop-color="#37d603"/><stop offset="0.8" stop-color="#2eca00"/><stop offset="1" stop-color="#23ba00"/></radialGradient><clipPath id="c1"><rect x="1575.2" y="440" width="16.2" height="70"/><rect x="1622" y="440" width="262" height="70"/></clipPath><filter id="bl" x="-10%" y="-10%" width="120%" height="120%"><feGaussianBlur stdDeviation="0.9"/></filter><filter id="bl2" x="-20%" y="-20%" width="140%" height="140%"><feGaussianBlur stdDeviation="1.4"/></filter><filter id="bl3" x="-50%" y="-50%" width="200%" height="200%"><feGaussianBlur stdDeviation="0.7"/></filter></defs><rect x="1122" y="450" width="762" height="569" fill="url(#vg)"/><g filter="url(#bl2)" fill="none" stroke="#7cf04a" stroke-width="6" opacity="0.55" style="font-family:'Liberation Sans',sans-serif;font-size:157px"><text transform="scale(0.93 1)" x="1171.8 1263.6 1308.4" y="538.6">0.6</text><g clip-path="url(#c1)"><text transform="scale(0.93 1)" x="1655.4 1742.2 1785.5" y="494.6">1.0</text></g></g><g filter="url(#bl)" fill="#021503" stroke="#021503" stroke-width="2.4" style="font-family:'Liberation Sans',sans-serif;font-size:157px"><text transform="scale(0.93 1)" x="1171.8 1263.6 1308.4" y="538.6">0.6</text><g clip-path="url(#c1)"><text transform="scale(0.93 1)" x="1655.4 1742.2 1785.5" y="494.6">1.0</text></g></g><g fill="#0d5a10" filter="url(#bl3)" opacity="0.6"><ellipse cx="1301" cy="452" rx="2.2" ry="3" transform="rotate(18 1301 452)"/><ellipse cx="1443" cy="515" rx="2.8" ry="2.5" transform="rotate(18 1443 515)"/><ellipse cx="1389" cy="582" rx="1.5" ry="3" transform="rotate(18 1389 582)"/><ellipse cx="1355" cy="610" rx="1.2" ry="2.6" transform="rotate(18 1355 610)"/><ellipse cx="1353" cy="555" rx="1.2" ry="2.8" transform="rotate(18 1353 555)"/><ellipse cx="1237" cy="545" rx="1.2" ry="2.6" transform="rotate(18 1237 545)"/><ellipse cx="1147" cy="714" rx="2.2" ry="2.2" transform="rotate(18 1147 714)"/><ellipse cx="1357" cy="700" rx="1.5" ry="4" transform="rotate(18 1357 700)"/><ellipse cx="1388" cy="790" rx="4.5" ry="1.6" transform="rotate(18 1388 790)"/><ellipse cx="1301" cy="510" rx="1" ry="2.4" transform="rotate(18 1301 510)"/><ellipse cx="1259" cy="636" rx="1.2" ry="2" transform="rotate(18 1259 636)"/><ellipse cx="1213" cy="716" rx="1.2" ry="2.4" transform="rotate(18 1213 716)"/><ellipse cx="1286" cy="675" rx="1" ry="2.4" transform="rotate(18 1286 675)"/><ellipse cx="1390" cy="728" rx="1.2" ry="2" transform="rotate(18 1390 728)"/><ellipse cx="1718" cy="470" rx="1.6" ry="3.2" transform="rotate(18 1718 470)"/><ellipse cx="1729" cy="520" rx="1.4" ry="3" transform="rotate(18 1729 520)"/><ellipse cx="1743" cy="460" rx="2" ry="2" transform="rotate(18 1743 460)"/><ellipse cx="1745" cy="488" rx="1.6" ry="2" transform="rotate(18 1745 488)"/><ellipse cx="1752" cy="505" rx="1.5" ry="2.4" transform="rotate(18 1752 505)"/><ellipse cx="1763" cy="690" rx="1.6" ry="2" transform="rotate(18 1763 690)"/><ellipse cx="1777" cy="600" rx="1.3" ry="3" transform="rotate(18 1777 600)"/><ellipse cx="1800" cy="605" rx="1.2" ry="2.4" transform="rotate(18 1800 605)"/><ellipse cx="1683" cy="480" rx="1.2" ry="2.6" transform="rotate(18 1683 480)"/><ellipse cx="1601" cy="565" rx="1.2" ry="2.6" transform="rotate(18 1601 565)"/><ellipse cx="1135" cy="788" rx="1.6" ry="2.2" transform="rotate(18 1135 788)"/><ellipse cx="1157" cy="815" rx="1.4" ry="2.4" transform="rotate(18 1157 815)"/><ellipse cx="1255" cy="835" rx="1.2" ry="2.4" transform="rotate(18 1255 835)"/><ellipse cx="1293" cy="880" rx="1.4" ry="2.4" transform="rotate(18 1293 880)"/><ellipse cx="1332" cy="740" rx="1.2" ry="2.4" transform="rotate(18 1332 740)"/><ellipse cx="1350" cy="985" rx="2" ry="3" transform="rotate(18 1350 985)"/><ellipse cx="1530" cy="880" rx="1.4" ry="2" transform="rotate(18 1530 880)"/><ellipse cx="1560" cy="810" rx="1.3" ry="2.4" transform="rotate(18 1560 810)"/><ellipse cx="1545" cy="790" rx="1.2" ry="2" transform="rotate(18 1545 790)"/><ellipse cx="1500" cy="905" rx="1.3" ry="2.4" transform="rotate(18 1500 905)"/><ellipse cx="1725" cy="780" rx="1.2" ry="2.6" transform="rotate(18 1725 780)"/><ellipse cx="1745" cy="800" rx="1.2" ry="2.2" transform="rotate(18 1745 800)"/><ellipse cx="1770" cy="815" rx="1.8" ry="2.4" transform="rotate(18 1770 815)"/><ellipse cx="1650" cy="995" rx="1.8" ry="2.6" transform="rotate(18 1650 995)"/><ellipse cx="1170" cy="948" rx="1.2" ry="2" transform="rotate(18 1170 948)"/><ellipse cx="1140" cy="935" rx="1.8" ry="2.6" transform="rotate(18 1140 935)"/><ellipse cx="1182" cy="920" rx="1.2" ry="2.2" transform="rotate(18 1182 920)"/><ellipse cx="1165" cy="1000" rx="1.4" ry="2" transform="rotate(18 1165 1000)"/><ellipse cx="1345" cy="970" rx="1.5" ry="2.4" transform="rotate(18 1345 970)"/><ellipse cx="1655" cy="770" rx="1.6" ry="2.2" transform="rotate(18 1655 770)"/><ellipse cx="1476" cy="985" rx="1.4" ry="2" transform="rotate(18 1476 985)"/><ellipse cx="1806" cy="950" rx="1.2" ry="2.2" transform="rotate(18 1806 950)"/><ellipse cx="1835" cy="880" rx="1.2" ry="2.2" transform="rotate(18 1835 880)"/><ellipse cx="1590" cy="745" rx="1.2" ry="2.2" transform="rotate(18 1590 745)"/><ellipse cx="1470" cy="600" rx="1.3" ry="2.6" transform="rotate(18 1470 600)"/><ellipse cx="1660" cy="575" rx="1.2" ry="2.4" transform="rotate(18 1660 575)"/><ellipse cx="1840" cy="590" rx="1.2" ry="2.2" transform="rotate(18 1840 590)"/><ellipse cx="1190" cy="560" rx="1.2" ry="2.6" transform="rotate(18 1190 560)"/><ellipse cx="1245" cy="900" rx="1.2" ry="2.2" transform="rotate(18 1245 900)"/><ellipse cx="1430" cy="950" rx="1.2" ry="2.4" transform="rotate(18 1430 950)"/><ellipse cx="1600" cy="960" rx="1.2" ry="2.4" transform="rotate(18 1600 960)"/><ellipse cx="1280" cy="770" rx="1.2" ry="2.2" transform="rotate(18 1280 770)"/></g><g fill="none" stroke="#86f25a" stroke-width="3" opacity="0.5" filter="url(#bl2)"><circle cx="1201.3" cy="647.4" r="34"/><circle cx="1204.2" cy="865.4" r="34.5"/><circle cx="1418.6" cy="644.2" r="45.4"/><circle cx="1635.6" cy="641.2" r="56.4"/><circle cx="1421" cy="861.8" r="45.4"/><circle cx="1637.8" cy="859.4" r="56.4"/><circle cx="1853.4" cy="640" r="68"/><circle cx="1856.3" cy="857.5" r="68"/><circle cx="1854" cy="1076" r="68"/></g><g fill="#010501" filter="url(#bl)"><circle cx="1201.3" cy="647.4" r="32.8"/><circle cx="1204.2" cy="865.4" r="33.3"/><circle cx="1418.6" cy="644.2" r="44.2"/><circle cx="1635.6" cy="641.2" r="55.2"/><circle cx="1421" cy="861.8" r="44.2"/><circle cx="1637.8" cy="859.4" r="55.2"/><circle cx="1853.4" cy="640" r="66.8"/><circle cx="1856.3" cy="857.5" r="66.8"/><circle cx="1854" cy="1076" r="66.8"/></g><circle cx="1852.6" cy="640" r="1.2" fill="#a8c8a0"/><g fill="none" stroke="#1a2cc0" stroke-width="1.2"><circle cx="1536.2" cy="751.4" r="203"/><circle cx="1418.6" cy="644.2" r="44.8" stroke-width="1" opacity="0.9"/><circle cx="1635.6" cy="641.2" r="55.8" stroke-width="1" opacity="0.9"/><circle cx="1421" cy="861.8" r="44.8" stroke-width="1" opacity="0.9"/><circle cx="1637.8" cy="859.4" r="55.8" stroke-width="1" opacity="0.9"/></g><g fill="none" stroke="#1428e0" stroke-width="1.1"><circle cx="1633.3" cy="859" r="70"/><circle cx="1633.3" cy="859" r="67.4" stroke-width="0.8" opacity="0.8"/><circle cx="1633.3" cy="859" r="36"/><path d="M1563.3 859 H1703.3 M1633.3 789 V929"/><path d="M1639.6 823.5 L1639.1 812.4 L1633.2 811.3"/><path d="M1598.5 868.3 L1588.6 873.4 L1590.1 879.2"/><path d="M1661.7 881.2 L1671.7 886.0 L1675.4 881.3"/></g><path d="M1418.6 644.2 L1633.3 859" stroke="#1a2a7a" stroke-width="1.2"/><path d="M1418.6 644.2 L1648.6 641" stroke="#8a1a9a" stroke-width="1.2"/><path d="M1418.6 644.2 L1572 642.1" stroke="#2a2070" stroke-width="1.2"/><path d="M1572.6 646 A154 154 0 0 1 1527.5 753.1" fill="none" stroke="#98148c" stroke-width="1.2"/><path d="M1572.6 643 L1570.6 652 L1574.8 652Z" fill="#98148c"/><path d="M1526.0 754.6 L1534.0 749.6 L1530.0 746.1 Z" fill="#98148c"/><g stroke="#ee2c14" stroke-width="1"><path d="M1216 450 L1791 1019"/><path d="M1795.5 450 L1234.6 1019"/></g><g stroke="#7a3000" stroke-width="0.6" opacity="0.45"><path d="M1217 450 L1792 1019"/><path d="M1796.5 450 L1235.6 1019"/></g><path d="M1528.4 644.5 L1546 660 M1546.5 654 V660.5 H1540" fill="none" stroke="#e03a1a" stroke-width="1"/><text x="1127" y="489" style="font-family:'Liberation Sans',sans-serif;font-size:12.5px;font-weight:bold" fill="#20c46c" opacity="0.8">Rate: 32</text><text transform="scale(0.92 1)" x="1232.1 1306.2" y="1003.5" style="font-family:'Liberation Sans',sans-serif;font-size:93px" fill="#12fa2a">OK</text><rect x="1122" y="450" width="762" height="1.6" fill="#5a6a5a" opacity="0.8"/></svg><div class="abs" style="left:1805px;top:451px;width:79px;height:21px;background:#fff;border-top:1px solid #6a6a6a"></div><div class="t" style="left:1808px;top:454.5px;font-size:12.6px;font-weight:bold;letter-spacing:0.2px">4.0</div><svg class="abs" style="left:1867px;top:457px" width="14" height="10"><path d="M3.2 2.5 L7.2 6.6 L11.2 2.5" fill="none" stroke="#333" stroke-width="1.1"/></svg><div class="abs" style="left:1120px;top:449px;width:2px;height:571px;background:#e3e3e3"></div>
<div class="btn " style="left:1892px;top:451px;width:34px;height:33px"><svg width="31" height="30" viewBox="0 0 31 30"><path d="M5.4 15 H28 M16 4 V25.4" stroke="#111" stroke-width="1.5"/><path d="M17.6 8 L20 11.6 L22.4 8 L24.8 11.6 L27 8" fill="none" stroke="#e8101c" stroke-width="1.2"/></svg></div>
<div class="btn " style="left:1892px;top:485px;width:34px;height:33px"><svg width="31" height="30" viewBox="0 0 31 30"><path d="M7.6 4.6 V25.4" stroke="#111" stroke-width="1.5"/><path d="M9.4 7.6 H24.6" stroke="#e8101c" stroke-width="1.3"/><path d="M8.40 7.60 L11.20 6.06 L11.20 9.14 Z" fill="#e8101c"/><path d="M25.40 7.60 L22.60 9.14 L22.60 6.06 Z" fill="#e8101c"/><path d="M26 5 V10.2" stroke="#111" stroke-width="1.4"/><path d="M9.4 14.6 H18.6" stroke="#e8101c" stroke-width="1.3"/><path d="M8.40 14.60 L11.20 13.06 L11.20 16.14 Z" fill="#e8101c"/><path d="M19.40 14.60 L16.60 16.14 L16.60 13.06 Z" fill="#e8101c"/><path d="M20 12 V17.2" stroke="#111" stroke-width="1.4"/><path d="M9.4 21.8 H14.6" stroke="#e8101c" stroke-width="1.3"/><path d="M8.40 21.80 L11.20 20.26 L11.20 23.34 Z" fill="#e8101c"/><path d="M15.40 21.80 L12.60 23.34 L12.60 20.26 Z" fill="#e8101c"/><path d="M16 19.2 V24.4" stroke="#111" stroke-width="1.4"/></svg></div>
<div class="btn " style="left:1892px;top:519px;width:34px;height:33px"><svg width="31" height="30" viewBox="0 0 31 30"><path d="M7.4 12 V18.6 M24.6 12 V18.6" stroke="#111" stroke-width="1.5"/><path d="M9.4 15.3 H22.6" stroke="#e8101c" stroke-width="1.5"/><path d="M8.20 15.30 L11.40 13.54 L11.40 17.06 Z" fill="#e8101c"/><path d="M23.80 15.30 L20.60 17.06 L20.60 13.54 Z" fill="#e8101c"/></svg></div>
<div class="btn " style="left:1892px;top:553px;width:34px;height:33px"><svg width="31" height="30" viewBox="0 0 31 30"><path d="M5 15.4 L9.8 11 M14.4 25.4 L19.4 20.8" stroke="#111" stroke-width="1.5"/><path d="M8.8 14.4 L15.6 22" stroke="#e8101c" stroke-width="1.4"/><path d="M7.80 13.40 L11.04 14.51 L8.60 16.73 Z" fill="#e8101c"/><path d="M16.60 23.00 L13.36 21.89 L15.80 19.67 Z" fill="#e8101c"/><text x="15.8" y="14" style="font-family:'Liberation Serif',serif;font-style:italic;font-size:13px" fill="#e8101c">X</text></svg></div>
<div class="btn " style="left:1892px;top:587px;width:34px;height:33px"><svg width="31" height="30" viewBox="0 0 31 30"><path d="M5 15.4 L9.8 11 M14.4 25.4 L19.4 20.8" stroke="#111" stroke-width="1.5"/><path d="M8.8 14.4 L15.6 22" stroke="#e8101c" stroke-width="1.4"/><path d="M7.80 13.40 L11.04 14.51 L8.60 16.73 Z" fill="#e8101c"/><path d="M16.60 23.00 L13.36 21.89 L15.80 19.67 Z" fill="#e8101c"/><text x="15.8" y="14" style="font-family:'Liberation Serif',serif;font-style:italic;font-size:13px" fill="#e8101c">Y</text></svg></div>
<div class="btn " style="left:1892px;top:621px;width:34px;height:33px"><svg width="31" height="30" viewBox="0 0 31 30"><path d="M18.4 6 L6.4 18.2 M6.4 22.4 H23" fill="none" stroke="#111" stroke-width="1.5"/><path d="M12.4 13.4 Q15.8 16 14.6 21.4" fill="none" stroke="#e8101c" stroke-width="1.3"/><path d="M11 18.6 H17" stroke="#e8101c" stroke-width="1"/><text x="18" y="18.4" style="font-family:'Liberation Sans',sans-serif;font-weight:bold;font-size:9px" fill="#e8101c">A</text></svg></div>
<div class="btn " style="left:1892px;top:655px;width:34px;height:33px"><svg width="31" height="30" viewBox="0 0 31 30"><text x="16.4" y="24.6" text-anchor="middle" style="font-family:'Liberation Serif',serif;font-weight:bold;font-size:25px" fill="#111">T</text></svg></div>
<div class="btn " style="left:1892px;top:689px;width:34px;height:33px"><svg width="31" height="30" viewBox="0 0 31 30"><path d="M6.4 6.4 H13 L6.4 13 Z M26 6.4 V13 L19.4 6.4 Z M6.4 24.6 V18 L13 24.6 Z M26 24.6 H19.4 L26 18 Z" fill="#111"/></svg></div>
<div class="btn " style="left:1892px;top:723px;width:34px;height:33px"><svg width="31" height="30" viewBox="0 0 31 30"><rect x="4.2" y="3.6" width="24" height="22" fill="#f4f4f4" stroke="#2a6a4a" stroke-width="1.2"/><path d="M24.43 13.09 L24.43 16.51 L21.87 17.35 L21.95 17.15 L23.17 19.55 L20.75 21.97 L18.35 20.75 L18.55 20.67 L17.71 23.23 L14.29 23.23 L13.45 20.67 L13.65 20.75 L11.25 21.97 L8.83 19.55 L10.05 17.15 L10.13 17.35 L7.57 16.51 L7.57 13.09 L10.13 12.25 L10.05 12.45 L8.83 10.05 L11.25 7.63 L13.65 8.85 L13.45 8.93 L14.29 6.37 L17.71 6.37 L18.55 8.93 L18.35 8.85 L20.75 7.63 L23.17 10.05 L21.95 12.45 L21.87 12.25Z" fill="#111"/><circle cx="16" cy="14.8" r="3.8" fill="#f4f4f4"/></svg></div>
<div class="btn " style="left:1892px;top:757px;width:34px;height:33px"><svg width="31" height="30" viewBox="0 0 31 30"><rect x="4.4" y="7.4" width="13" height="13.4" fill="#111"/><path d="M8.6 10 V18.4 M12.8 10 V18.4" stroke="#e01018" stroke-width="2.6"/><path d="M18.6 14.2 L26 8.4 V20 Z" fill="#111"/></svg></div>
<div class="btn " style="left:1892px;top:791px;width:34px;height:33px"><svg width="31" height="30" viewBox="0 0 31 30"><rect x="4.6" y="5" width="2.2" height="17.6" fill="#111"/><rect x="8.2" y="5" width="1.6" height="17.6" fill="#111"/><rect x="11" y="5" width="1" height="17.6" fill="#111"/><rect x="13.6" y="5" width="0.8" height="17.6" fill="#111"/><rect x="16.2" y="5" width="0.6" height="17.6" fill="#111"/><rect x="18" y="5" width="1.2" height="17.6" fill="#111"/><rect x="20.4" y="5" width="1.6" height="17.6" fill="#111"/><rect x="23.2" y="5" width="0.6" height="17.6" fill="#111"/><rect x="25.6" y="5" width="1.2" height="17.6" fill="#111"/><text x="9.6" y="28.4" style="font-family:'Liberation Sans','Noto Sans CJK SC',sans-serif;font-size:4.6px;letter-spacing:3.4px" fill="#444">条码</text></svg></div>
</body></html>
